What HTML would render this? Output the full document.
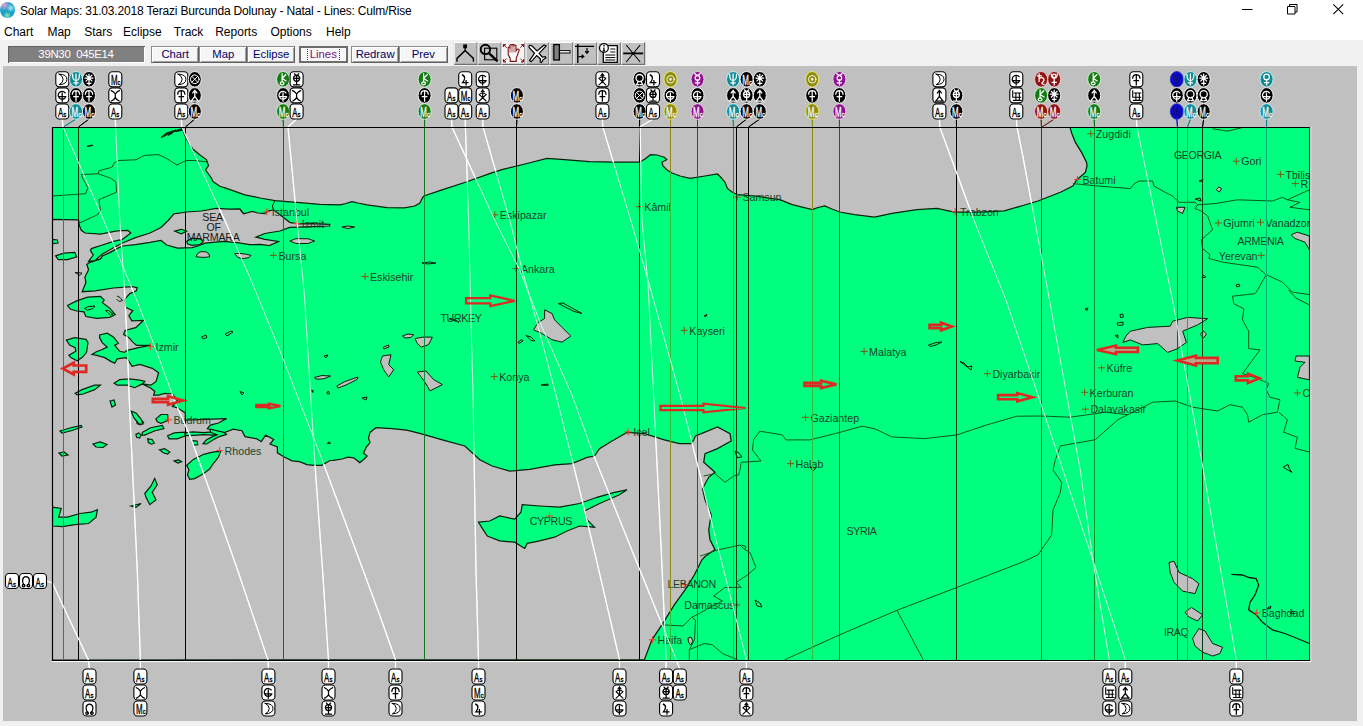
<!DOCTYPE html>
<html lang="en"><head><meta charset="utf-8"><title>Solar Maps</title>
<style>
html,body{margin:0;padding:0}
body{width:1363px;height:726px;overflow:hidden;background:#f0f0f0;font-family:"Liberation Sans",sans-serif;position:relative}
#title{position:absolute;left:0;top:0;width:1363px;height:22px;background:#fff}
#title .ico{position:absolute;left:0;top:2px;width:15px;height:16px;border-radius:50%;background:radial-gradient(circle at 28% 18%,#dca4dc 0,rgba(220,164,220,0) 38%),radial-gradient(circle at 72% 38%,#a8ecf4 0,rgba(168,236,244,0) 30%),radial-gradient(circle at 48% 84%,#98e4a8 0,rgba(152,228,168,0) 26%),#18a0c8}
#title .tt{position:absolute;left:20px;top:4px;font-size:12px;color:#000;white-space:nowrap;letter-spacing:-0.18px}
#title .wc{position:absolute;left:1223px;top:0}
#menu{position:absolute;left:0;top:22px;width:1363px;height:18px;background:#fff;font-size:12px}
#menu span{position:absolute;top:3px;color:#000}
#tb{position:absolute;left:0;top:40px;width:1363px;height:26px;background:#f0f0f0}
.coord{position:absolute;left:7.5px;top:6px;width:137px;height:17px;background:#808080;color:#fff;font-size:11.4px;letter-spacing:-0.3px;line-height:17px;text-align:center;box-shadow:inset 1px 1px 0 #606060, inset -1px -1px 0 #fff;white-space:pre}
.btn{position:absolute;top:6px;height:17px;line-height:15px;text-align:center;font-size:11.3px;color:#000068;background:#f6f6f6;border:1px solid #8c8c8c;border-right-color:#606060;border-bottom-color:#606060;box-shadow:inset 1px 1px 0 #fff,inset -1px -1px 0 #a0a0a0;box-sizing:border-box}
.btn.on{border:2px solid #6c6c6c;line-height:13px;color:#7a147a;background:#f8f8f8;box-shadow:none}
.btn.on i{position:absolute;left:6px;right:6px;top:1px;bottom:1px;border-left:1px dotted #404040;border-right:1px dotted #404040}
#client{position:absolute;left:3px;top:66px;width:1354px;height:655px;background:#c0c0c0}
svg#m{position:absolute;left:0;top:0}
svg text{font-family:"Liberation Sans",sans-serif}
</style></head><body>
<div id="title"><span class="ico"></span><span class="tt">Solar Maps: 31.03.2018 Terazi Burcunda Dolunay - Natal - Lines: Culm/Rise</span>
<svg class="wc" width="140" height="22" viewBox="0 0 140 22"><path d="M19 9.5H29.5M64.5 6.5H72V14H64.5ZM66.5 6.5V4.5H74V12H72" fill="none" stroke="#000" stroke-width="1"/><path d="M110.3 4.3L120.2 14.2M120.2 4.3L110.3 14.2" stroke="#000" stroke-width="1.05" fill="none"/></svg></div>
<div id="menu">
<span style="left:4px">Chart</span>
<span style="left:47.4px">Map</span>
<span style="left:84.2px">Stars</span>
<span style="left:123px">Eclipse</span>
<span style="left:173.8px">Track</span>
<span style="left:215.2px">Reports</span>
<span style="left:270.4px">Options</span>
<span style="left:326px">Help</span>
</div>
<div id="tb">
<div class="coord">39N30&nbsp; 045E14</div>
<div class="btn" style="left:151px;width:48.4px">Chart</div>
<div class="btn" style="left:199.2px;width:48.2px">Map</div>
<div class="btn" style="left:247.2px;width:48px">Eclipse</div>
<div class="btn on" style="left:299px;width:48.6px">Lines<i></i></div>
<div class="btn" style="left:351px;width:48.2px">Redraw</div>
<div class="btn" style="left:399px;width:48.6px">Prev</div>
</div>
<div id="client"></div>
<svg id="m" width="1363" height="726" viewBox="0 0 1363 726">
<defs><clipPath id="mc"><rect x="52.5" y="127.5" width="1257" height="533"/></clipPath>
<clipPath id="gc"><rect x="0" y="0" width="1363" height="127.5"/><rect x="0" y="660" width="1363" height="66"/><rect x="0" y="0" width="52.5" height="726"/><path d="M181.8 127L182.5 128.7L185.2 136.2L190 145L193.3 149.5L200 155L206.5 159.8L208.5 165.7L205.6 170L211 177.5L213 181.5L219.8 186.3L225 187.8L244.9 194.8L260 198L274.8 200.6L299.7 202.6L319.7 204.3L340 204.8L346 203.5L352 201.6L358 203L367 204.8L387 207.6L404.5 207.8L414.8 206L420 203L422.3 198L424 196L442 189.8L464.7 182.5L491.8 172.8L502 169.7L527 163.5L547 158.5L564.5 159.7L589.4 161.7L614.4 162.2L639.3 162.2L645 159L650.5 154.7L657 155L664.3 157.2L666.8 159.7L661.8 162.2L663 166L666.8 169.7L672 173L680 176L690 178.4L705 176L717.4 174L721 177.5L725 182.2L727.4 188.4L732 192L737.4 194.7L754.8 196L779.8 199.6L792.2 204.6L812.2 209.6L818 207.5L824.7 205.9L832 209L839.6 212L854.6 214.6L874.6 217L892 213.4L917 209.6L937 208.4L954.4 212L979.3 212L1004.3 210.9L1023 205.5L1038 201L1060.4 192.3L1072.9 186L1076.6 179.9L1085.4 172.4L1087 166L1086.6 162.4L1081.6 152.4L1075.4 142.4L1072 134L1070.4 128.7L1070 127Z"/><path d="M52 219.4L78.5 219.8L79.4 225.7L81.3 230.3L85 233L100.5 234L117 230.8L128 230.3L130.8 233L122.5 239.4L113.4 241.3L102.4 245L91.4 248.6L90.4 250.4L93.2 255L88.6 261.4L95 260.5L102.4 254L113.4 247.7L122.5 243L135.4 237.6L150 233L161 227.5L168.4 220.2L173.9 213.8L186.7 212L201.4 211L216 208.3L229 209.2L239.9 208.8L243.6 213.8L252.3 211.5L258 213L264.8 213.5L268 211L273.5 209.8L279 214L284.8 218.5L289.7 222.3L297.2 223.8L312 223.6L329.7 224.4L329.7 226L304.7 226.8L289.7 227.3L279.8 231L264.8 233.5L256 237.2L264.8 239.4L278.5 241.5L269.3 245.6L260 244.4L249.8 244.7L237.4 242.6L223.4 241.3L205 243.1L198 246L192.2 247.7L177.6 248L166.6 245L161 240.4L150 242.4L135.4 244.6L122.5 246L118.9 247.6L109.7 252.6L102.4 256L100.5 258.9L89.5 262.6L86.8 264.4L88.6 269.7L84.9 277L85.9 282.5L82.2 291.7L95 290.8L113.4 288L131.7 286.6L137.2 287.7L136.3 290.8L129.9 293.6L124.6 299.2L125.6 307.4L132.8 310.7L128.9 315.6L131.8 320.9L143.4 320.4L135.7 327.6L125.1 330.5L123.6 334.4L128.9 337.7L132.8 342.1L136.6 345.4L150.1 345.4L138.6 347.6L127 350.3L124.5 352.4L119.7 351.3L114.7 345.1L118.4 343.2L113.4 336.9L107.2 333.2L99.6 335L99.6 337.6L102.2 342.6L107.2 347L102.2 349.5L95.9 352L92.1 354.5L95.9 355.1L104.7 357.6L110.9 361.4L114.7 363.3L117.2 358.9L126 357.6L127.2 358.9L132.2 366.4L139.8 364.5L152.3 368.3L158.6 372.7L156.1 381.4L151 385.2L142.3 383.9L151 388.3L154.8 391.5L153.6 395.2L158.6 395.2L164.8 393.3L172.4 394L177.4 400.2L172.4 406.5L177.4 407.8L182.4 411L185.3 413L185.3 420.2L226.5 418.6L218.4 423L210.3 425.1L207.4 428.8L209.6 429.5L218.4 431.9L224.3 432.5L233.2 429.2L242 430.7L245 436.6L256.8 438.8L261.2 441.7L265.6 435.1L273.7 439.5L270 444L277.4 446.9L277.4 452.8L283.3 456.5L292.1 460.9L299.5 461.6L306.9 464.6L314.2 465.3L321.6 465.3L330 460.5L333.2 460.4L342 459L347.9 457.2L353.8 457.8L359.7 462.6L363.4 459.7L367.1 456L363.4 453.1L366.3 447.2L370 442.7L368.5 438.3L370 432.4L375.9 427.7L392.1 428.7L406.9 430.2L421.6 433.9L442.4 439.9L464.8 446L479.8 459.8L492.2 466L509.7 471L529.7 469.3L554.6 464.8L572 463.6L587 457.3L594.5 456L599.5 448.6L612 441L627 432.4L644.4 433.6L664.4 439.9L679.3 443.6L691.8 443.6L695.5 436L704.3 432.4L717.5 427L730 433.6L731.2 441L717.5 448.6L705 453.6L703.7 462.3L715 472.3L708.7 477.3L702.5 488.5L705 499.8L711.2 514.7L708.7 529.7L710 539.7L715 549.6L705 556.5L701.8 560L694.3 575L686.8 587.4L674.3 604.9L661.9 624.8L651.9 639.8L644.4 659.7L52 660Z"/></clipPath></defs>
<g id="tools">
<rect x="453.7" y="42" width="23.9" height="22.6" fill="#c0c0c0"/>
<path d="M454.2 64.6V42.5H477.1" stroke="#fff" stroke-width="1" fill="none"/>
<path d="M454.2 64.3H477.1V42.5" stroke="#707070" stroke-width="1.2" fill="none"/>
<rect x="477.6" y="42" width="23.9" height="22.6" fill="#c0c0c0"/>
<path d="M478.1 64.6V42.5H501.1" stroke="#fff" stroke-width="1" fill="none"/>
<path d="M478.1 64.3H501.1V42.5" stroke="#707070" stroke-width="1.2" fill="none"/>
<rect x="501.6" y="42" width="23.9" height="22.6" fill="#f4f4f4"/>
<path d="M502.1 64.6V42.5H525.0" stroke="#fff" stroke-width="1" fill="none"/>
<path d="M502.1 64.3H525.0V42.5" stroke="#707070" stroke-width="1.2" fill="none"/>
<rect x="525.5" y="42" width="23.9" height="22.6" fill="#c0c0c0"/>
<path d="M526.0 64.6V42.5H548.9" stroke="#fff" stroke-width="1" fill="none"/>
<path d="M526.0 64.3H548.9V42.5" stroke="#707070" stroke-width="1.2" fill="none"/>
<rect x="549.4" y="42" width="23.9" height="22.6" fill="#c0c0c0"/>
<path d="M549.9 64.6V42.5H572.8" stroke="#fff" stroke-width="1" fill="none"/>
<path d="M549.9 64.3H572.8V42.5" stroke="#707070" stroke-width="1.2" fill="none"/>
<rect x="573.4" y="42" width="23.9" height="22.6" fill="#c0c0c0"/>
<path d="M573.9 64.6V42.5H596.8" stroke="#fff" stroke-width="1" fill="none"/>
<path d="M573.9 64.3H596.8V42.5" stroke="#707070" stroke-width="1.2" fill="none"/>
<rect x="597.3" y="42" width="23.9" height="22.6" fill="#c0c0c0"/>
<path d="M597.8 64.6V42.5H620.7" stroke="#fff" stroke-width="1" fill="none"/>
<path d="M597.8 64.3H620.7V42.5" stroke="#707070" stroke-width="1.2" fill="none"/>
<rect x="621.2" y="42" width="23.9" height="22.6" fill="#c0c0c0"/>
<path d="M621.7 64.6V42.5H644.6" stroke="#fff" stroke-width="1" fill="none"/>
<path d="M621.7 64.3H644.6V42.5" stroke="#707070" stroke-width="1.2" fill="none"/>
<g transform="translate(453.7 42)" fill="none" stroke="#000" stroke-width="1.5"><path d="M11.4 6V8.6L3.3 16.4V19.8M11.4 8.6L19.7 16.4V19.8" stroke-width="1.4"/><rect x="9.5" y="2.4" width="3.8" height="3.8" fill="#000" stroke="none"/></g>
<g transform="translate(477.6 42)" fill="none" stroke="#000" stroke-width="1.5"><rect x="7" y="6.2" width="12.2" height="11.6" stroke-width="1.1"/><circle cx="7.8" cy="7.4" r="4.7" stroke-width="1.9"/><path d="M11.6 11.4L20 19.4" stroke-width="2.5"/></g>
<g transform="translate(501.6 42)" fill="none" stroke="#000" stroke-width="1.5"><path d="M8.6 19.4V16.4L6.6 12.6V5.6Q7.4 4.4 8.4 5.6V3.2Q9.4 2 10.4 3.2V2.8Q11.4 1.6 12.4 2.8V3.4Q13.4 2.4 14.4 3.6V9L15.6 7.2Q17 6.6 17.6 8L16 12.6L14.6 16.4V19.4Z" stroke="#7a0c0c" stroke-width="1.1" fill="#fff"/><path d="M8.4 5.6V10.6M10.4 3.4V10.6M12.4 3V10.6" stroke="#7a0c0c" stroke-width="0.7"/><path d="M1.8 2.6L5 5.8M22 2.6L18.8 5.8M1.8 19.8L5 16.6M22 19.8L18.8 16.6" stroke="#8a1010" stroke-width="1"/><path d="M1.8 2.6H4.2M1.8 2.6V5M22 2.6H19.6M22 2.6V5M1.8 19.8H4.4M1.8 19.8V17.2M22 19.8H19.4M22 19.8V17.2" stroke="#8a1010" stroke-width="1.2"/></g>
<g transform="translate(525.5 42)" fill="none" stroke="#000" stroke-width="1.5"><path transform="translate(23.6 0) scale(-1 1)" d="M3 4L5 3L12 9L17.6 3.6Q20.6 2.4 20 5.4L14.6 11.4L19.6 18.6L18 19.8L12.4 13.6L8.6 17L9 20L7.6 20.6L6 17.6L3.2 16L3.8 14.6L6.8 15L10 11.4Z" fill="#fff" stroke-width="1.2"/></g>
<g transform="translate(549.4 42)" fill="none" stroke="#000" stroke-width="1.5"><rect x="4.4" y="2.6" width="5.6" height="15.4" fill="#808080" stroke-width="1.3"/><rect x="10" y="8.6" width="10.6" height="2.4" fill="#fff" stroke-width="1"/><path d="M3.4 4V17" stroke="#606060" stroke-width="0.8" stroke-dasharray="1 1"/></g>
<g transform="translate(573.4 42)" fill="none" stroke="#000" stroke-width="1.5"><path d="M4.4 2V21M1.6 4.4H20.6" stroke-width="1.4"/><path d="M13.6 6V11M11.8 9.2L13.6 11.4L15.4 9.2M5 14.6H10M8.2 12.8L10.4 14.6L8.2 16.4" stroke-width="1.2"/></g>
<g transform="translate(597.3 42)" fill="none" stroke="#000" stroke-width="1.5"><path d="M6 7V20.4H20V3.6H10" fill="#fff" stroke-width="1.3"/><path d="M13 7H18M13 10H18M8 13H18M8 15.6H18M8 18H18" stroke-width="1"/><circle cx="6.6" cy="6" r="4.4" fill="#fff" stroke-width="1.3"/><path d="M6.6 5.6V8.6M5.4 8.8H7.8" stroke-width="1.3"/><rect x="5.9" y="3" width="1.5" height="1.4" fill="#000" stroke="none"/></g>
<g transform="translate(621.2 42)" fill="none" stroke="#000" stroke-width="1.5"><path d="M2 11.4H22" stroke-width="1.8"/><path d="M5 3L19 20M19 3L5 20" stroke-width="1.1"/></g>
</g>
<rect x="52.5" y="127.5" width="1257" height="533" fill="#00ff7e"/>
<g clip-path="url(#mc)">
<path d="M181.8 127L182.5 128.7L185.2 136.2L190 145L193.3 149.5L200 155L206.5 159.8L208.5 165.7L205.6 170L211 177.5L213 181.5L219.8 186.3L225 187.8L244.9 194.8L260 198L274.8 200.6L299.7 202.6L319.7 204.3L340 204.8L346 203.5L352 201.6L358 203L367 204.8L387 207.6L404.5 207.8L414.8 206L420 203L422.3 198L424 196L442 189.8L464.7 182.5L491.8 172.8L502 169.7L527 163.5L547 158.5L564.5 159.7L589.4 161.7L614.4 162.2L639.3 162.2L645 159L650.5 154.7L657 155L664.3 157.2L666.8 159.7L661.8 162.2L663 166L666.8 169.7L672 173L680 176L690 178.4L705 176L717.4 174L721 177.5L725 182.2L727.4 188.4L732 192L737.4 194.7L754.8 196L779.8 199.6L792.2 204.6L812.2 209.6L818 207.5L824.7 205.9L832 209L839.6 212L854.6 214.6L874.6 217L892 213.4L917 209.6L937 208.4L954.4 212L979.3 212L1004.3 210.9L1023 205.5L1038 201L1060.4 192.3L1072.9 186L1076.6 179.9L1085.4 172.4L1087 166L1086.6 162.4L1081.6 152.4L1075.4 142.4L1072 134L1070.4 128.7L1070 127Z" fill="#c0c0c0" stroke="#03220a" stroke-width="1.25"/>
<path d="M52 219.4L78.5 219.8L79.4 225.7L81.3 230.3L85 233L100.5 234L117 230.8L128 230.3L130.8 233L122.5 239.4L113.4 241.3L102.4 245L91.4 248.6L90.4 250.4L93.2 255L88.6 261.4L95 260.5L102.4 254L113.4 247.7L122.5 243L135.4 237.6L150 233L161 227.5L168.4 220.2L173.9 213.8L186.7 212L201.4 211L216 208.3L229 209.2L239.9 208.8L243.6 213.8L252.3 211.5L258 213L264.8 213.5L268 211L273.5 209.8L279 214L284.8 218.5L289.7 222.3L297.2 223.8L312 223.6L329.7 224.4L329.7 226L304.7 226.8L289.7 227.3L279.8 231L264.8 233.5L256 237.2L264.8 239.4L278.5 241.5L269.3 245.6L260 244.4L249.8 244.7L237.4 242.6L223.4 241.3L205 243.1L198 246L192.2 247.7L177.6 248L166.6 245L161 240.4L150 242.4L135.4 244.6L122.5 246L118.9 247.6L109.7 252.6L102.4 256L100.5 258.9L89.5 262.6L86.8 264.4L88.6 269.7L84.9 277L85.9 282.5L82.2 291.7L95 290.8L113.4 288L131.7 286.6L137.2 287.7L136.3 290.8L129.9 293.6L124.6 299.2L125.6 307.4L132.8 310.7L128.9 315.6L131.8 320.9L143.4 320.4L135.7 327.6L125.1 330.5L123.6 334.4L128.9 337.7L132.8 342.1L136.6 345.4L150.1 345.4L138.6 347.6L127 350.3L124.5 352.4L119.7 351.3L114.7 345.1L118.4 343.2L113.4 336.9L107.2 333.2L99.6 335L99.6 337.6L102.2 342.6L107.2 347L102.2 349.5L95.9 352L92.1 354.5L95.9 355.1L104.7 357.6L110.9 361.4L114.7 363.3L117.2 358.9L126 357.6L127.2 358.9L132.2 366.4L139.8 364.5L152.3 368.3L158.6 372.7L156.1 381.4L151 385.2L142.3 383.9L151 388.3L154.8 391.5L153.6 395.2L158.6 395.2L164.8 393.3L172.4 394L177.4 400.2L172.4 406.5L177.4 407.8L182.4 411L185.3 413L185.3 420.2L226.5 418.6L218.4 423L210.3 425.1L207.4 428.8L209.6 429.5L218.4 431.9L224.3 432.5L233.2 429.2L242 430.7L245 436.6L256.8 438.8L261.2 441.7L265.6 435.1L273.7 439.5L270 444L277.4 446.9L277.4 452.8L283.3 456.5L292.1 460.9L299.5 461.6L306.9 464.6L314.2 465.3L321.6 465.3L330 460.5L333.2 460.4L342 459L347.9 457.2L353.8 457.8L359.7 462.6L363.4 459.7L367.1 456L363.4 453.1L366.3 447.2L370 442.7L368.5 438.3L370 432.4L375.9 427.7L392.1 428.7L406.9 430.2L421.6 433.9L442.4 439.9L464.8 446L479.8 459.8L492.2 466L509.7 471L529.7 469.3L554.6 464.8L572 463.6L587 457.3L594.5 456L599.5 448.6L612 441L627 432.4L644.4 433.6L664.4 439.9L679.3 443.6L691.8 443.6L695.5 436L704.3 432.4L717.5 427L730 433.6L731.2 441L717.5 448.6L705 453.6L703.7 462.3L715 472.3L708.7 477.3L702.5 488.5L705 499.8L711.2 514.7L708.7 529.7L710 539.7L715 549.6L705 556.5L701.8 560L694.3 575L686.8 587.4L674.3 604.9L661.9 624.8L651.9 639.8L644.4 659.7L52 660Z" fill="#c0c0c0" stroke="#03220a" stroke-width="1.25"/>
<g fill="#00ff7e" stroke="#03220a" stroke-width="1.2">
<path d="M66.4 340.1L74.6 337.6L85.9 339.4L88 342.3L86.5 352.6L82.1 357.6L77.1 360.7L70.8 357.6L68.9 355.1L75.8 351.3L75.2 347.6L69.6 345.1Z"/>
<path d="M114.1 383.3L119.7 379.6L129.7 378.9L139.8 380.2L144.8 381.4L142.3 383.9L134.7 387.7L127.2 385.2L117.2 385.2Z"/>
<path d="M75.2 393.3L82.1 389.6L94.6 385.2L100.3 385.2L94.6 389.6L83.3 394L77.1 394.8Z"/>
<path d="M186.7 465.3L193.4 459.4L203.7 454.3L212.5 452.1L220.6 451.3L218.4 457.2L212.5 464.6L209.6 469L203.7 473.4L194.8 478.6L189.7 479.3L187.5 474.9L189 469.7Z"/>
<path d="M167.6 435.8L174.2 432.9L184.5 432.2L185.3 435.8L177.2 438.8L169.1 438.8Z"/>
<path d="M155.8 418.9L161 414.5L167.6 414.5L168.3 420.4L161 423.3L157.3 421.8Z"/>
<path d="M142.5 432.2L150.6 427.7L162.4 425.5L163.9 428.5L155.1 430.7L144.7 435.1L141.8 435.1Z"/>
<path d="M135.9 434.4L138.8 432.9L141.1 435.1L139.6 438.1L136.6 437.3Z"/>
<path d="M136.6 420.4L141.1 419.6L143.6 422.6L140.3 424.8L137.1 423.6Z"/>
<path d="M147.7 438.8L152.1 439.5L154.3 443.2L151.4 444.2L148.4 442.5Z"/>
<path d="M159.5 449.8L164.6 448.7L169.8 452.1L167.6 454L163.2 452.8Z"/>
<path d="M174.2 460.9L178.6 459.9L181.6 461.6L177.9 463.1Z"/>
<path d="M191.9 440.7L197.1 441L197.8 444.7L193.4 445.1Z"/>
<path d="M185.7 432.6L193.4 431.9L203.7 432.6L212.5 431.9L219.9 433.3L212.5 435.1L203.7 434.7L193.4 435.3L185.7 435.7Z"/>
<path d="M210.3 429.2L224.3 432.5L226.5 434.4L218.4 436.9L212.5 440.3L206.6 444L203 443.7L206.6 439.8L212.5 436.6L217 434.8L210.3 432.2Z"/>
<path d="M154.7 478.5L157.2 484.8L152.2 492.3L156 499.8L149.8 504.7L146 497.3L144.8 493.5L151 486Z"/>
<path d="M131 506L141 503.5L136 507.4Z"/>
<path d="M52.5 507.2L61.2 508.5L58.7 517.2L67.4 517.2L79.9 513.5L91.1 512.2L97.4 509.7L96.1 517.2L88.6 523.5L74.9 524.7L62.4 526.7L52.5 526Z"/>
<path d="M93 444L100 442L107 444.5L103 447.5L96 447Z"/>
<path d="M60 431L70 428L81 425.5L82 427L72 430.5L62 433Z"/>
<path d="M59 453L64 452L68 455L62 456Z"/>
<path d="M110 401L114 400L115.5 405L112 407Z"/>
<path d="M131 411L136 413L141 419L143 424L139 424L134 418Z"/>
<path d="M55.6 255.9L63.8 253.2L74.8 252.3L76.7 256.9L67.5 259.6L58.3 259.6Z"/>
<path d="M52.5 239.4L57.4 240L58 243L52.5 243.5Z"/>
<path d="M67.5 305.5L76.7 300.9L87.7 297.2L100.5 296.3L104.2 300L102.4 302.7L109.7 308.2L115.2 314.6L109.7 317.4L96.9 318.3L85.9 316.5L84 311.9L76.7 311L70.3 309.1Z"/>
<path d="M174.8 231.2L181.2 229.3L186.7 231.2L181.2 233.9Z"/>
<path d="M186.7 241.3L192.2 238.2L201.4 239.1L203.2 241.8L199.6 244.6L192.2 245.3L187.7 244Z"/>
<path d="M478.5 522.2L489.8 521L499.7 516L514.7 519.2L521 512.2L522.2 504.7L539.6 506L559.6 507.2L579.6 503.5L597 497.3L614.5 492.3L627 489.8L619.5 494.8L599.5 503.5L584.5 511L587 519.7L594.5 527.2L579.6 526L567 531L554.6 537.2L539.6 540.9L527.2 543.4L524.7 548.4L514.7 542.2L499.7 540.9L487.3 536L482.3 528.4Z"/>
</g>
<g fill="#c0c0c0" stroke="#03220a" stroke-width="1">
<path d="M196 256.8L197.5 253.5L201 251.6L206 251.8L209 254L209.6 257L203 257.4Z"/>
<path d="M544.6 309.8L552 313.5L554.6 319.8L562 327.3L570.8 336L562 342.2L552 339.7L542 333.5L533.4 329.8L538.4 322.3L544.6 318.5Z"/>
<path d="M402.5 336L408 334L413.7 334.7L411 337.5L405 338Z"/>
<path d="M415 338.5L424 337L432.4 337.2L428.6 344.7L421 347.2L417 343Z"/>
<path d="M417.4 372L426 371L433.6 379.6L442.4 384.6L430 390.9L424.9 382Z"/>
<path d="M382.5 356L391 354.7L388.7 364.7L393.7 369.7L388.7 377L383.7 369.7L380.5 362Z"/>
<path d="M383 347.5L388.5 345L389 347L384 349Z"/>
<path d="M314.4 377.5L322 375.5L330.6 376L324 378.8L316 379.2Z"/>
<path d="M336.8 385.9L345 381.5L358 377L357 379.5L346 385L338 388Z"/>
<path d="M289.8 241L296 238.6L308 238.8L314.7 241L308 243.5L296 243.5Z"/>
<path d="M342 227L348 226L354.6 227L348 228.6Z"/>
<path d="M234.6 253.6L240 253.4L246 254.2L251 255.4L249 257.6L243 258.6L238 257.6Z"/>
<path d="M1122.8 342.4L1126 336L1130.3 331.2L1147.7 327.4L1170.2 326.2L1172.7 321.2L1187.6 317.4L1207.6 318.7L1197.6 324.9L1182.7 331.2L1186.4 342.4L1177.7 348.6L1167.7 352.4L1157.7 343.6L1142.7 344.9L1130.3 339.9Z"/>
<path d="M1200.3 334.3L1203.3 331L1206.5 334L1203.5 338Z"/>
<path d="M1296 356L1309.4 356L1309.4 379.8L1297.4 377.3L1300 367.3L1305 362.3L1295 361Z"/>
<path d="M1291 234.7L1297.4 232.2L1309.4 236L1309.4 249.7L1305 242.2L1295 238.5Z"/>
<path d="M1176.4 207.3L1185 207.3L1182.6 213.5L1177.5 211Z"/>
<path d="M1216.3 189.8L1218.8 187L1221.5 188.6L1219.5 192Z"/>
<path d="M1169 562.5L1174 561.2L1179 572.4L1192.6 578.7L1198.9 583.7L1195 593.6L1182.7 591.2L1174 582.4L1170.2 572.4Z"/>
<path d="M1185 612.3L1191.4 607.4L1202.6 614.8L1197.6 621L1189 617Z"/>
<path d="M1192.6 638.5L1198.9 628.6L1205 631L1212.6 643.5L1222.6 647.3L1220 653.5L1212.6 656L1202.6 652.2L1195 646Z"/>
<path d="M688 638L691 637L693 641L690.5 645L688.5 642Z"/>
</g>
<g fill="#03220a" stroke="#03220a" stroke-width="0.8">
<path d="M161 137.5L166 133L171 131.5L176 130L172 133.5L168 135.5L170 133L164 136.5Z"/>
<path d="M182 128.5L176 130.5L171 131.5L177 131.5L183 130Z"/>
</g>
<g fill="none" stroke="#03220a" stroke-width="1">
<path d="M558.4 303.6L563 303L582 313.5L574 311.5Z"/>
<path d="M449 318.6L453 319L456 320.4L459 322.4L456.5 321.2L452 320Z"/>
<path d="M422 263L430 262L436 263L428 264Z"/>
<path d="M541 385L548 384L548 385.5Z"/>
<path d="M518 342L522 339.5L523 341L519 343.5Z"/>
<path d="M526 335.5L531 337L535 341L531 340.5Z"/>
<path d="M704 316L707 314.5L706 316.5Z"/>
<path d="M928.5 345L936 342.5L942 342L936 345L930 346.5Z"/>
<path d="M960 361.5L964 363L968 367L972 366L971 370Z"/>
<path d="M1085 309L1088 308L1087 310.5Z"/>
<path d="M1120 314.5L1122.8 314L1123.5 317L1120.5 317.5Z"/>
<path d="M1117 323L1123 322L1123 325L1118 325.5Z"/>
<path d="M1115 335.5L1118 335L1118 338Z"/>
<path d="M1283 467L1288 464.5L1289.5 469L1292 472.5L1288 470Z"/>
<path d="M755 600L760 603L762 607L757 606Z"/>
<path d="M735 451L739 453L742 457L737 457.5Z"/>
<path d="M810 467L816 468L813 471Z"/>
<path d="M87 146.5L92 145L93 145.5Z"/>
<path d="M1199 181L1203 179.5L1202 181.5Z"/>
<path d="M1195 199L1200 198L1201 201Z"/>
<path d="M1203 275L1206 277L1202 278Z"/>
<path d="M1236 285L1239 284L1240 286L1237 287Z"/>
<path d="M327 392L329 391.5L329.5 394L327.5 394Z"/>
<path d="M311.5 390.5L313 390.5L313 392.5Z"/>
<path d="M362 398L367 397L366 400Z"/>
<path d="M327.5 443.4L329 441.8L330.6 443.4Z"/>
<path d="M240 391.5L244 393L242 395Z"/>
<path d="M201.5 337L206 335L207 337.5L203 339Z"/>
<path d="M225 334L231 331L233 332L227 336Z"/>
<path d="M324 356L328 355L326 358Z"/>
<path d="M75 272.5L82 273L80 275.5Z"/>
<path d="M1267 608.5L1271 606L1270 609Z"/>
<path d="M1290 613L1293 611L1294 614Z"/>
</g>
<g fill="none" stroke="#03220a" stroke-width="1">
<path d="M273.5 209.8L272.4 206L274.8 200.6"/>
<path d="M240 208.8L242 212.6L246 213.8"/>
<path d="M117 296L120 297.5L122.5 300.5L119 301.5L116.5 299"/>
<path d="M84.5 308.5L88 306.6L95 306L93 308.5L87 310.2L84.5 308.5"/>
<path d="M105.5 310.5L108.5 310.5L113 314L110.5 315L105.5 310.5"/>
</g>
<g fill="none" stroke="#0a5a18" stroke-width="1">
<path d="M208 162L194.8 160.5L186 160.5L177 165L165.3 157.6L158 154.6L144.6 155.4L135.8 159.8L118 160.5L113.7 163.5L112.2 167.2L99 170.8L98.2 173.8"/>
<path d="M98.2 173.8L81.3 174.5L82.7 178.2L87.9 187.8L85.7 193.7L52.5 196"/>
<path d="M98.2 173.8L110.7 178.2L115.9 181.9L116.6 192.2L99 199.6L100.4 210L98.2 214.3L85.7 220.2L79 223.2"/>
<path d="M703.7 476L715 473.6L725 482.3L733.7 476L738.7 474.8L740 469.8L741.2 462.3L761 461L752.4 449.9L753.6 439.9L759.9 431.2L782.3 434.9L786 439.9L809.8 439.9L839.7 432.4L862.1 426.2L874.6 428.7L892 436.9L924.5 438.6L957 434.9L986.8 424.9L1016.8 416.2L1041.7 416L1070.4 417.2L1105.3 412.2L1127.8 414.7L1152.7 402.2L1175.2 401L1192.6 407.2L1217.6 411L1230 404.7L1242.5 407.2L1247.5 414.7L1248.7 422.2L1262.5 414.7L1277.4 412.2L1280 399.7L1270 397.3L1266.2 389.8L1268.7 383.5L1257.5 378.5L1242.5 373.6L1260 349.9L1248.7 348.6L1248.7 331.2L1242.5 319.9L1243.8 308.7L1233.8 303.7L1232.5 296.2L1255 293.7L1257.5 290L1266.2 274.7L1257.5 267.2L1222.6 262.2L1208.8 258.4L1210 254.7L1202.6 248.5L1201.3 239.7L1212.6 229.8L1207.6 216L1201.3 211L1195 208.6L1197.6 204.8L1215 203.6L1237.5 199.8L1272.4 201L1282.4 197.3L1287.4 199.8L1309.4 189.8"/>
<path d="M1287.4 199.8L1299.9 202.3L1290 207.3L1309.4 209.8"/>
<path d="M1266.2 274.7L1282.4 282.1L1292.4 292.1L1309.4 294.6"/>
<path d="M1288.6 290L1296 298L1309.4 305"/>
<path d="M1278.7 412.2L1287.4 419.7L1283.7 432.2L1297.4 437.2L1295 448.4L1309.4 452"/>
<path d="M1072.9 183.6L1097.8 186L1130.3 188.6L1134 184L1139 181L1152.7 181L1154 186L1165.2 192.3L1172.7 196L1178.9 202.3L1195 202.3L1197.6 204.8"/>
<path d="M1212.6 128.7L1227.5 131.2L1242.5 127.5"/>
<path d="M1127.8 414.7L1117.8 419.7L1095.3 439.7L1060.4 445.9L1055.4 459.6L1053 470L1061.7 482.4L1060.4 492.4L1053 509.9L1051.7 534.8L1038 554.8L1023 561.8L957 587.4L897 610.3L839.7 634.8L784.8 659.7"/>
<path d="M897 610.3L923.2 659.7"/>
<path d="M700 556.2L717.5 550L740 545L744 549L750 552.5L756 567.4L747.4 575L736.2 582.4L741.2 587.4L725 587.4L713.7 596L722.4 601L710 607.3L699.3 613.5L691.8 617.3L683 626L661.9 624.8"/>
<path d="M691.8 617.3L695.5 620L694.5 639.8L689.3 649.7L689.3 659.7"/>
<path d="M689.3 649.7L704.3 643.5L712.5 644.8L722.4 653.5L737.4 659.7"/>
<path d="M741.2 545L746 546.5L745 549"/>
</g>
<g fill="none" stroke="#04200a" stroke-width="1.3">
<path d="M1231.3 574.4L1242.5 575L1249 577.5L1256.2 578.7L1258.7 584.9L1255 594.9L1250 602.4L1248.7 609.9L1256.2 614.8L1262.5 622.3L1272.4 629.8L1285 633.5L1297.4 638.5L1309.4 643.5"/>
</g>
</g>
<g clip-path="url(#mc)"><g font-size="10.67" fill="#18452a">
<path d="M263.3 211.8H270.3M266.8 208.3V215.3" stroke="#e8402a" stroke-width="1" fill="none"/>
<text x="271.8" y="216">Istanbul</text>
<path d="M293.2 223.5H300.2M296.7 220V227" stroke="#e8402a" stroke-width="1" fill="none"/>
<text x="301.7" y="227.7">Izmit</text>
<path d="M270 255.4H277M273.5 251.9V258.9" stroke="#7a5a12" stroke-width="1" fill="none"/>
<text x="278.5" y="259.6">Bursa</text>
<path d="M361.5 276.6H368.5M365 273.1V280.1" stroke="#7a5a12" stroke-width="1" fill="none"/>
<text x="370" y="280.8">Eskisehir</text>
<path d="M491.3 214.8H498.3M494.8 211.3V218.3" stroke="#7a5a12" stroke-width="1" fill="none"/>
<text x="499.8" y="219">Eskipazar</text>
<path d="M512.5 268.6H519.5M516 265.1V272.1" stroke="#7a5a12" stroke-width="1" fill="none"/>
<text x="521" y="272.8">Ankara</text>
<path d="M490.7 376.6H497.7M494.2 373.1V380.1" stroke="#7a5a12" stroke-width="1" fill="none"/>
<text x="499.2" y="380.8">Konya</text>
<path d="M680.8 330.3H687.8M684.3 326.8V333.8" stroke="#7a5a12" stroke-width="1" fill="none"/>
<text x="689.3" y="334.5">Kayseri</text>
<path d="M635.8 206.6H642.8M639.3 203.1V210.1" stroke="#7a5a12" stroke-width="1" fill="none"/>
<text x="644.3" y="210.8">Kâmil</text>
<path d="M733.9 197.1H740.9M737.4 193.6V200.6" stroke="#e8402a" stroke-width="1" fill="none"/>
<text x="742.4" y="201.3">Samsun</text>
<path d="M951.6 211.6H958.6M955.1 208.1V215.1" stroke="#e8402a" stroke-width="1" fill="none"/>
<text x="960.1" y="215.8">Trabzon</text>
<path d="M1087.3 133.7H1094.3M1090.8 130.2V137.2" stroke="#7a5a12" stroke-width="1" fill="none"/>
<text x="1095.8" y="137.9">Zugdidi</text>
<path d="M1073.9 179.4H1080.9M1077.4 175.9V182.9" stroke="#e8402a" stroke-width="1" fill="none"/>
<text x="1082.4" y="183.6">Batumi</text>
<path d="M1232.8 161.2H1239.8M1236.3 157.7V164.7" stroke="#7a5a12" stroke-width="1" fill="none"/>
<text x="1241.3" y="165.4">Gori</text>
<path d="M1276.9 174.4H1283.9M1280.4 170.9V177.9" stroke="#7a5a12" stroke-width="1" fill="none"/>
<text x="1285.4" y="178.6">Tbilisi</text>
<path d="M1291.9 183.6H1298.9M1295.4 180.1V187.1" stroke="#7a5a12" stroke-width="1" fill="none"/>
<text x="1300.4" y="187.8">R</text>
<path d="M1214.8 223H1221.8M1218.3 219.5V226.5" stroke="#7a5a12" stroke-width="1" fill="none"/>
<text x="1223.3" y="227.2">Gjumri</text>
<path d="M1257 222.3H1264M1260.5 218.8V225.8" stroke="#7a5a12" stroke-width="1" fill="none"/>
<text x="1265.5" y="226.5">Vanadzor</text>
<path d="M860.6 351.5H867.6M864.1 348V355" stroke="#7a5a12" stroke-width="1" fill="none"/>
<text x="869.1" y="355.7">Malatya</text>
<path d="M983.9 373.7H990.9M987.4 370.2V377.2" stroke="#7a5a12" stroke-width="1" fill="none"/>
<text x="992.4" y="377.9">Diyarbakir</text>
<path d="M1098.1 367.8H1105.1M1101.6 364.3V371.3" stroke="#7a5a12" stroke-width="1" fill="none"/>
<text x="1106.6" y="372">Küfre</text>
<path d="M1081.1 392.3H1088.1M1084.6 388.8V395.8" stroke="#7a5a12" stroke-width="1" fill="none"/>
<text x="1089.6" y="396.5">Kerburan</text>
<path d="M1081.9 409.2H1088.9M1085.4 405.7V412.7" stroke="#7a5a12" stroke-width="1" fill="none"/>
<text x="1090.4" y="413.4">Dalavakasir</text>
<path d="M1293.9 393H1300.9M1297.4 389.5V396.5" stroke="#7a5a12" stroke-width="1" fill="none"/>
<text x="1302.4" y="397.2">O</text>
<path d="M802 417.4H809M805.5 413.9V420.9" stroke="#7a5a12" stroke-width="1" fill="none"/>
<text x="810.5" y="421.6">Gaziantep</text>
<path d="M787 463.6H794M790.5 460.1V467.1" stroke="#7a5a12" stroke-width="1" fill="none"/>
<text x="795.5" y="467.8">Halab</text>
<path d="M624.7 431.9H631.7M628.2 428.4V435.4" stroke="#e8402a" stroke-width="1" fill="none"/>
<text x="633.2" y="436.1">Icel</text>
<path d="M147 346.7H154M150.5 343.2V350.2" stroke="#e8402a" stroke-width="1" fill="none"/>
<text x="155.5" y="350.9">Izmir</text>
<path d="M165 419.9H172M168.5 416.4V423.4" stroke="#e8402a" stroke-width="1" fill="none"/>
<text x="173.5" y="424.1">Budrum</text>
<path d="M216.1 450.6H223.1M219.6 447.1V454.1" stroke="#e8402a" stroke-width="1" fill="none"/>
<text x="224.6" y="454.8">Rhodes</text>
<path d="M648.9 639.8H655.9M652.4 636.3V643.3" stroke="#e8402a" stroke-width="1" fill="none"/>
<text x="657.4" y="644">Haifa</text>
<path d="M1253.2 612.8H1260.2M1256.7 609.3V616.3" stroke="#e8402a" stroke-width="1" fill="none"/>
<text x="1261.7" y="617">Baghdad</text>
<path d="M1257.7 255.4H1264.7M1261.2 251.9V258.9" stroke="#7a5a12" stroke-width="1" fill="none"/>
<text x="1218.8" y="259.6">Yerevan</text>
<path d="M733.4 604.9H740.4M736.9 601.4V608.4" stroke="#7a5a12" stroke-width="1" fill="none"/>
<text x="684.3" y="609.1">Damascus</text>
<path d="M546.1 516H553.1M549.6 512.5V519.5" stroke="#e8402a" stroke-width="1" fill="none"/>
<path d="M681.3 584.4H688.3M684.8 580.9V587.9" stroke="#e8402a" stroke-width="1" fill="none"/>
<text x="440.4" y="321.8" letter-spacing="-0.35">TURKEY</text>
<text x="1173.9" y="158.7" letter-spacing="-0.35">GEORGIA</text>
<text x="1237.5" y="244.7" letter-spacing="-0.35">ARMENIA</text>
<text x="846.4" y="534.7" letter-spacing="-0.35">SYRIA</text>
<text x="529.7" y="525" letter-spacing="-0.35">CYPRUS</text>
<text x="667.4" y="587.9" letter-spacing="-0.35">LEBANON</text>
<text x="1163.9" y="636" letter-spacing="-0.35">IRAQ</text>
</g><g font-size="10.67" fill="#181818">
<text x="202.3" y="221.1" letter-spacing="-0.2">SEA</text>
<text x="206.5" y="231.2" letter-spacing="-0.2">OF</text>
<text x="186.7" y="241.3" letter-spacing="-0.2">MARMARA</text>
</g></g>
<path d="M76 119L63.5 127V660" stroke="#00b074" stroke-width="1" fill="none"/>
<path d="M89 119L78.5 127V660" stroke="#003c12" stroke-width="1" fill="none"/>
<path d="M194.8 119L185.5 127V660" stroke="#003c12" stroke-width="1" fill="none"/>
<path d="M283.1 119L283.5 127V660" stroke="#00902e" stroke-width="1" fill="none"/>
<path d="M424.6 119L424.5 127V660" stroke="#00902e" stroke-width="1" fill="none"/>
<path d="M516.9 119L516.5 127V660" stroke="#003c12" stroke-width="1" fill="none"/>
<path d="M639.6 119L639.5 127V660" stroke="#003c12" stroke-width="1" fill="none"/>
<path d="M670.5 119L670.5 127V660" stroke="#30be3c" stroke-width="1" fill="none"/>
<path d="M697.5 119L697.5 127V660" stroke="#00704e" stroke-width="1" fill="none"/>
<path d="M733.1 119L733.5 127V660" stroke="#00b074" stroke-width="1" fill="none"/>
<path d="M746.6 119L736.5 127V660" stroke="#003c12" stroke-width="1" fill="none"/>
<path d="M759.8 119L748.5 127V660" stroke="#003c12" stroke-width="1" fill="none"/>
<path d="M812.2 119L812.5 127V660" stroke="#30be3c" stroke-width="1" fill="none"/>
<path d="M839.4 119L839.5 127V660" stroke="#00704e" stroke-width="1" fill="none"/>
<path d="M956.4 119L956.5 127V660" stroke="#003c12" stroke-width="1" fill="none"/>
<path d="M1041.1 119L1041.5 127V660" stroke="#2c641c" stroke-width="1" fill="none"/>
<path d="M1054.2 119L1042.2 127" stroke="#2c641c" stroke-width="1" fill="none"/>
<path d="M1094.2 119L1094.5 127V660" stroke="#00902e" stroke-width="1" fill="none"/>
<path d="M1176.8 119L1177.5 127V660" stroke="#0a4cb0" stroke-width="1" fill="none"/>
<path d="M1190.4 119L1187.5 127V660" stroke="#00b074" stroke-width="1" fill="none"/>
<path d="M1203.7 119L1202.5 127V660" stroke="#003c12" stroke-width="1" fill="none"/>
<path d="M1266.6 119L1266.5 127V660" stroke="#00b074" stroke-width="1" fill="none"/>
<path d="M62.3 119L63 127L103.6 220L122.3 265L137.6 302.3L155.9 349.7L174.7 401L189.7 435L213 499.8L237.9 571L268.1 660.3L268.4 669" stroke="#d4ffe8" stroke-width="1" fill="none" stroke-opacity="0.95"/>
<path d="M115.3 119L115.6 127L119.8 220L124.8 294.8L127.3 344.7L129.3 401L133.5 489.8L137.3 571L140.4 660L140.4 669" stroke="#d4ffe8" stroke-width="1" fill="none" stroke-opacity="0.95"/>
<path d="M181.3 119L181.8 127L224.6 220L252 282.4L279.5 349.7L299.4 401L320.3 454.9L363.4 571L380 616L395.5 659.7L395.5 669" stroke="#d4ffe8" stroke-width="1" fill="none" stroke-opacity="0.95"/>
<path d="M296.6 119L288 127L296.9 220L304.4 294.8L310.6 395L315 464.8L322.6 571L328.5 660L328.5 669" stroke="#d4ffe8" stroke-width="1" fill="none" stroke-opacity="0.95"/>
<path d="M451.5 119L452 127L494.7 220L519.7 269.9L542.1 327.3L572 395L593.6 454.9L631.8 550L650 594.9L676.4 660L679.8 669" stroke="#d4ffe8" stroke-width="1" fill="none" stroke-opacity="0.95"/>
<path d="M465.2 119L465.4 127L468.6 220L471 319.8L473 395L476 571L478.5 659.7L478.5 669" stroke="#d4ffe8" stroke-width="1" fill="none" stroke-opacity="0.95"/>
<path d="M482.7 119L483 127L509.7 220L522.2 269.9L539.6 332.2L556 395L579.6 489.8L596 558L619.5 659.7L619.5 669" stroke="#d4ffe8" stroke-width="1" fill="none" stroke-opacity="0.95"/>
<path d="M602.4 119L602.8 127L630.7 220L649.4 284.9L680 395L699.4 472.3L715.6 538L746.4 659.7L746.4 669" stroke="#d4ffe8" stroke-width="1" fill="none" stroke-opacity="0.95"/>
<path d="M653 119L640 127L641.9 220L648.1 284.9L653.6 395L661.6 558L666.1 659.7L666.1 669" stroke="#d4ffe8" stroke-width="1" fill="none" stroke-opacity="0.95"/>
<path d="M939.4 119L939.8 127L974.3 221L1006 300L1040 401L1092.8 559.8L1125.3 659.7L1125.3 669" stroke="#d4ffe8" stroke-width="1" fill="none" stroke-opacity="0.95"/>
<path d="M1016.3 119L1017 127L1023 157L1049.5 300L1080.4 471L1092.8 559.8L1109.3 659.7L1109.3 669" stroke="#d4ffe8" stroke-width="1" fill="none" stroke-opacity="0.95"/>
<path d="M1136.3 119L1137 127L1172.7 301L1202.6 466L1216.3 545L1236.3 659.7L1236.3 669" stroke="#d4ffe8" stroke-width="1" fill="none" stroke-opacity="0.95"/>
<path d="M47 581L52.4 583L88.5 660.3L89.5 669" stroke="#d4ffe8" stroke-width="1" fill="none" stroke-opacity="0.95"/>
<g clip-path="url(#gc)"><path d="M76 119L63.5 127V660" stroke="#14828c" stroke-width="1" fill="none"/>
<path d="M89 119L78.5 127V660" stroke="#000" stroke-width="1" fill="none"/>
<path d="M194.8 119L185.5 127V660" stroke="#000" stroke-width="1" fill="none"/>
<path d="M283.1 119L283.5 127V660" stroke="#14701a" stroke-width="1" fill="none"/>
<path d="M424.6 119L424.5 127V660" stroke="#14701a" stroke-width="1" fill="none"/>
<path d="M516.9 119L516.5 127V660" stroke="#000" stroke-width="1" fill="none"/>
<path d="M639.6 119L639.5 127V660" stroke="#000" stroke-width="1" fill="none"/>
<path d="M670.5 119L670.5 127V660" stroke="#8c8c14" stroke-width="1" fill="none"/>
<path d="M697.5 119L697.5 127V660" stroke="#8c148c" stroke-width="1" fill="none"/>
<path d="M733.1 119L733.5 127V660" stroke="#14828c" stroke-width="1" fill="none"/>
<path d="M746.6 119L736.5 127V660" stroke="#000" stroke-width="1" fill="none"/>
<path d="M759.8 119L748.5 127V660" stroke="#000" stroke-width="1" fill="none"/>
<path d="M812.2 119L812.5 127V660" stroke="#8c8c14" stroke-width="1" fill="none"/>
<path d="M839.4 119L839.5 127V660" stroke="#8c148c" stroke-width="1" fill="none"/>
<path d="M956.4 119L956.5 127V660" stroke="#000" stroke-width="1" fill="none"/>
<path d="M1041.1 119L1041.5 127V660" stroke="#8c1414" stroke-width="1" fill="none"/>
<path d="M1054.2 119L1042.2 127" stroke="#8c1414" stroke-width="1" fill="none"/>
<path d="M1094.2 119L1094.5 127V660" stroke="#14701a" stroke-width="1" fill="none"/>
<path d="M1176.8 119L1177.5 127V660" stroke="#1010d0" stroke-width="1" fill="none"/>
<path d="M1190.4 119L1187.5 127V660" stroke="#14828c" stroke-width="1" fill="none"/>
<path d="M1203.7 119L1202.5 127V660" stroke="#000" stroke-width="1" fill="none"/>
<path d="M1266.6 119L1266.5 127V660" stroke="#14828c" stroke-width="1" fill="none"/>
<path d="M62.3 119L63 127L103.6 220L122.3 265L137.6 302.3L155.9 349.7L174.7 401L189.7 435L213 499.8L237.9 571L268.1 660.3L268.4 669" stroke="#fff" stroke-width="1.3" fill="none"/>
<path d="M115.3 119L115.6 127L119.8 220L124.8 294.8L127.3 344.7L129.3 401L133.5 489.8L137.3 571L140.4 660L140.4 669" stroke="#fff" stroke-width="1.3" fill="none"/>
<path d="M181.3 119L181.8 127L224.6 220L252 282.4L279.5 349.7L299.4 401L320.3 454.9L363.4 571L380 616L395.5 659.7L395.5 669" stroke="#fff" stroke-width="1.3" fill="none"/>
<path d="M296.6 119L288 127L296.9 220L304.4 294.8L310.6 395L315 464.8L322.6 571L328.5 660L328.5 669" stroke="#fff" stroke-width="1.3" fill="none"/>
<path d="M451.5 119L452 127L494.7 220L519.7 269.9L542.1 327.3L572 395L593.6 454.9L631.8 550L650 594.9L676.4 660L679.8 669" stroke="#fff" stroke-width="1.3" fill="none"/>
<path d="M465.2 119L465.4 127L468.6 220L471 319.8L473 395L476 571L478.5 659.7L478.5 669" stroke="#fff" stroke-width="1.3" fill="none"/>
<path d="M482.7 119L483 127L509.7 220L522.2 269.9L539.6 332.2L556 395L579.6 489.8L596 558L619.5 659.7L619.5 669" stroke="#fff" stroke-width="1.3" fill="none"/>
<path d="M602.4 119L602.8 127L630.7 220L649.4 284.9L680 395L699.4 472.3L715.6 538L746.4 659.7L746.4 669" stroke="#fff" stroke-width="1.3" fill="none"/>
<path d="M653 119L640 127L641.9 220L648.1 284.9L653.6 395L661.6 558L666.1 659.7L666.1 669" stroke="#fff" stroke-width="1.3" fill="none"/>
<path d="M939.4 119L939.8 127L974.3 221L1006 300L1040 401L1092.8 559.8L1125.3 659.7L1125.3 669" stroke="#fff" stroke-width="1.3" fill="none"/>
<path d="M1016.3 119L1017 127L1023 157L1049.5 300L1080.4 471L1092.8 559.8L1109.3 659.7L1109.3 669" stroke="#fff" stroke-width="1.3" fill="none"/>
<path d="M1136.3 119L1137 127L1172.7 301L1202.6 466L1216.3 545L1236.3 659.7L1236.3 669" stroke="#fff" stroke-width="1.3" fill="none"/>
<path d="M47 581L52.4 583L88.5 660.3L89.5 669" stroke="#fff" stroke-width="1.3" fill="none"/></g>
<g clip-path="url(#mc)"><path d="M86.2 365.5H73.7V362.8L62.8 368.6L73.7 374.4V371.8H86.2Z" fill="none" stroke="#dc2a22" stroke-width="2.7" stroke-linejoin="miter"/>
<path d="M152.8 398.9H168.1V396.3L183.1 400.5L168.1 404.7V402.1H152.8Z" fill="none" stroke="#dc2a22" stroke-width="2.7" stroke-linejoin="miter"/>
<path d="M256.4 405.1H269.0V403.8L280.4 406L269.0 408.2V406.9H256.4Z" fill="none" stroke="#dc2a22" stroke-width="2.6" stroke-linejoin="miter"/>
<path d="M466.1 298.2H490.3V295.5L514.6 300.8L490.3 306.1V303.4H466.1Z" fill="none" stroke="#dc2a22" stroke-width="2.3" stroke-linejoin="miter"/>
<path d="M660.5 405.8H703.4V403.6L745.6 408L703.4 412.4V410.2H660.5Z" fill="none" stroke="#dc2a22" stroke-width="2.2" stroke-linejoin="miter"/>
<path d="M804.5 382.9H821.1V380.7L836.4 384.4L821.1 388.1V385.8H804.5Z" fill="none" stroke="#dc2a22" stroke-width="2.7" stroke-linejoin="miter"/>
<path d="M929.6 324.9H941.2V322.7L951.8 326.5L941.2 330.3V328.1H929.6Z" fill="none" stroke="#dc2a22" stroke-width="2.7" stroke-linejoin="miter"/>
<path d="M998.1 395.1H1017.3V393.1L1032.7 397.2L1017.3 401.3V399.3H998.1Z" fill="none" stroke="#dc2a22" stroke-width="2.6" stroke-linejoin="miter"/>
<path d="M1137.9 347.8H1116.0V345.6L1096.9 349.9L1116.0 354.2V352.0H1137.9Z" fill="#b8a888" stroke="#dc2a22" stroke-width="2.6" stroke-linejoin="miter"/>
<path d="M1217.7 357.9H1195.9V355.7L1177.3 360.6L1195.9 365.5V363.3H1217.7Z" fill="#b8a888" stroke="#dc2a22" stroke-width="2.6" stroke-linejoin="miter"/>
<path d="M1235.8 376.2H1248.0V373.6L1259.5 378.3L1248.0 383.0V380.4H1235.8Z" fill="none" stroke="#dc2a22" stroke-width="2.6" stroke-linejoin="miter"/></g>
<path d="M52.5 661V127.5H1309.5" fill="none" stroke="#000" stroke-width="1.2"/><path d="M52 660.5H1310" stroke="#000" stroke-width="1.2"/><path d="M1309.8 127V661" stroke="#000" stroke-width="1"/><path d="M52 661.6H1311" stroke="#fff" stroke-width="1"/><path d="M1310.8 127V662" stroke="#e8e8e8" stroke-width="1"/>
<g transform="translate(55.3 71.3)"><rect x="0.5" y="0.5" width="13" height="15" rx="3.6" ry="3.6" fill="#fff" stroke="#000" stroke-width="1.1"/><g fill="none" stroke="#000" stroke-width="1.25" stroke-linecap="square" style="color:#000"><path d="M3.8 2.8Q11.8 3 11.6 8Q11.6 13 3.8 13.4Q7.8 11.6 7.8 8Q7.8 4.4 3.8 2.8Z" stroke-width="1"/></g></g>
<g transform="translate(55.3 87.4)"><rect x="0.5" y="0.5" width="13" height="15" rx="3.6" ry="3.6" fill="#fff" stroke="#000" stroke-width="1.1"/><g fill="none" stroke="#000" stroke-width="1.25" stroke-linecap="square" style="color:#000"><path d="M9.8 5.4A3.9 3.9 0 1 0 9.8 10.4M6.9 5.6V13.6M3.8 9.3H10.4"/></g></g>
<g transform="translate(55.3 103.5)"><rect x="0.5" y="0.5" width="13" height="15" rx="3.6" ry="3.6" fill="#fff" stroke="#000" stroke-width="1.1"/><g stroke="#000" stroke-width="0.35" fill="#000"><text x="2.6" y="13.5" font-size="13.4" textLength="5.2" lengthAdjust="spacingAndGlyphs">A</text><text x="8" y="13.5" font-size="8" textLength="3" lengthAdjust="spacingAndGlyphs">s</text></g></g>
<g transform="translate(69.0 71.3)"><ellipse cx="7" cy="8" rx="6.5" ry="7.8" fill="#148a94" stroke="#c8f4f8" stroke-width="0.9"/><g fill="none" stroke="#fff" stroke-width="1.25" stroke-linecap="square" style="color:#fff"><path d="M7 2.8V13.6M3.6 3.2Q3.4 9.2 7 9.2Q10.6 9.2 10.4 3.2M5 11.6H9"/></g></g>
<g transform="translate(69.0 87.4)"><ellipse cx="7" cy="8" rx="6.5" ry="7.8" fill="#000" stroke="#fff" stroke-width="0.9"/><g fill="none" stroke="#fff" stroke-width="1.25" stroke-linecap="square" style="color:#fff"><path d="M3.4 6.8Q3.6 3.2 7 3.2Q10.4 3.2 10.6 6.8M7 3.2V13.6M4.8 9.2H9.2"/></g></g>
<g transform="translate(69.0 103.5)"><ellipse cx="7" cy="8" rx="6.5" ry="7.8" fill="#148a94" stroke="#c8f4f8" stroke-width="0.9"/><g stroke="#fff" stroke-width="0.3" fill="#fff"><text x="2.6" y="13.5" font-size="14" textLength="6.6" lengthAdjust="spacingAndGlyphs">M</text><text x="9.3" y="13.5" font-size="8" textLength="2.9" lengthAdjust="spacingAndGlyphs">c</text></g></g>
<g transform="translate(82.0 71.3)"><ellipse cx="7" cy="8" rx="6.5" ry="7.8" fill="#000" stroke="#fff" stroke-width="0.9"/><g fill="none" stroke="#fff" stroke-width="1.25" stroke-linecap="square" style="color:#fff"><path d="M7 3V13.6M3.2 6.8H10.8M4.2 4L9.8 9.6M9.8 4L4.2 9.6M5.2 12H8.8"/></g></g>
<g transform="translate(82.0 87.4)"><ellipse cx="7" cy="8" rx="6.5" ry="7.8" fill="#000" stroke="#fff" stroke-width="0.9"/><g fill="none" stroke="#fff" stroke-width="1.25" stroke-linecap="square" style="color:#fff"><path d="M3.4 6.8Q3.6 3.2 7 3.2Q10.4 3.2 10.6 6.8M7 3.2V13.6M4.8 9.2H9.2"/></g></g>
<g transform="translate(82.0 103.5)"><ellipse cx="7" cy="8" rx="6.5" ry="7.8" fill="#000" stroke="#fff" stroke-width="0.9"/><g stroke="#fff" stroke-width="0.3" fill="#fff"><text x="2.6" y="13.5" font-size="14" textLength="6.6" lengthAdjust="spacingAndGlyphs">M</text><text x="9.3" y="13.5" font-size="8" textLength="2.9" lengthAdjust="spacingAndGlyphs">c</text></g></g>
<g transform="translate(108.3 71.3)"><rect x="0.5" y="0.5" width="13" height="15" rx="3.6" ry="3.6" fill="#fff" stroke="#000" stroke-width="1.1"/><g stroke="#000" stroke-width="0.35" fill="#000"><text x="2.6" y="13.5" font-size="14" textLength="6.6" lengthAdjust="spacingAndGlyphs">M</text><text x="9.3" y="13.5" font-size="8" textLength="2.9" lengthAdjust="spacingAndGlyphs">c</text></g></g>
<g transform="translate(108.3 87.4)"><rect x="0.5" y="0.5" width="13" height="15" rx="3.6" ry="3.6" fill="#fff" stroke="#000" stroke-width="1.1"/><g fill="none" stroke="#000" stroke-width="1.25" stroke-linecap="square" style="color:#000"><path d="M3 3.2Q5.6 4.4 7 6.6Q8.4 4.4 11 3.2M7 6.6V10.2M7 10.2Q5.8 12.4 3.2 13.6M7 10.2Q8.2 12.4 10.8 13.6"/></g></g>
<g transform="translate(108.3 103.5)"><rect x="0.5" y="0.5" width="13" height="15" rx="3.6" ry="3.6" fill="#fff" stroke="#000" stroke-width="1.1"/><g stroke="#000" stroke-width="0.35" fill="#000"><text x="2.6" y="13.5" font-size="13.4" textLength="5.2" lengthAdjust="spacingAndGlyphs">A</text><text x="8" y="13.5" font-size="8" textLength="3" lengthAdjust="spacingAndGlyphs">s</text></g></g>
<g transform="translate(174.3 71.3)"><rect x="0.5" y="0.5" width="13" height="15" rx="3.6" ry="3.6" fill="#fff" stroke="#000" stroke-width="1.1"/><g fill="none" stroke="#000" stroke-width="1.25" stroke-linecap="square" style="color:#000"><path d="M3.8 2.8Q11.8 3 11.6 8Q11.6 13 3.8 13.4Q7.8 11.6 7.8 8Q7.8 4.4 3.8 2.8Z" stroke-width="1"/></g></g>
<g transform="translate(174.3 87.4)"><rect x="0.5" y="0.5" width="13" height="15" rx="3.6" ry="3.6" fill="#fff" stroke="#000" stroke-width="1.1"/><g fill="none" stroke="#000" stroke-width="1.25" stroke-linecap="square" style="color:#000"><path d="M3.4 6.8Q3.6 3.2 7 3.2Q10.4 3.2 10.6 6.8M7 3.2V13.6M4.8 9.2H9.2"/></g></g>
<g transform="translate(174.3 103.5)"><rect x="0.5" y="0.5" width="13" height="15" rx="3.6" ry="3.6" fill="#fff" stroke="#000" stroke-width="1.1"/><g stroke="#000" stroke-width="0.35" fill="#000"><text x="2.6" y="13.5" font-size="13.4" textLength="5.2" lengthAdjust="spacingAndGlyphs">A</text><text x="8" y="13.5" font-size="8" textLength="3" lengthAdjust="spacingAndGlyphs">s</text></g></g>
<g transform="translate(187.8 71.3)"><ellipse cx="7" cy="8" rx="6.5" ry="7.8" fill="#000" stroke="#fff" stroke-width="0.9"/><g fill="none" stroke="#fff" stroke-width="1.25" stroke-linecap="square" style="color:#fff"><circle cx="7" cy="8" r="4.3" stroke-width="1"/><path d="M4 5L10 11M10 5L4 11" stroke-width="1"/></g></g>
<g transform="translate(187.8 87.4)"><ellipse cx="7" cy="8" rx="6.5" ry="7.8" fill="#000" stroke="#fff" stroke-width="0.9"/><g fill="none" stroke="#fff" stroke-width="1.25" stroke-linecap="square" style="color:#fff"><path d="M7 3V9.6M5 5.4L7 3L9 5.4M7 9L3.8 13.2M7 9L10.2 13.2M3.2 13.6H10.8"/></g></g>
<g transform="translate(187.8 103.5)"><ellipse cx="7" cy="8" rx="6.5" ry="7.8" fill="#000" stroke="#fff" stroke-width="0.9"/><g stroke="#fff" stroke-width="0.3" fill="#fff"><text x="2.6" y="13.5" font-size="14" textLength="6.6" lengthAdjust="spacingAndGlyphs">M</text><text x="9.3" y="13.5" font-size="8" textLength="2.9" lengthAdjust="spacingAndGlyphs">c</text></g></g>
<g transform="translate(276.1 71.3)"><ellipse cx="7" cy="8" rx="6.5" ry="7.8" fill="#147a14" stroke="#d8f4d8" stroke-width="0.9"/><g fill="none" stroke="#fff" stroke-width="1.25" stroke-linecap="square" style="color:#fff"><path d="M6 2.6V10.4M6 7L9.6 3.4M6 7L9.8 9.6"/><ellipse cx="6" cy="12" rx="1.9" ry="1.5"/></g></g>
<g transform="translate(276.1 87.4)"><ellipse cx="7" cy="8" rx="6.5" ry="7.8" fill="#000" stroke="#fff" stroke-width="0.9"/><g fill="none" stroke="#fff" stroke-width="1.25" stroke-linecap="square" style="color:#fff"><path d="M9.8 5.4A3.9 3.9 0 1 0 9.8 10.4M6.9 5.6V13.6M3.8 9.3H10.4"/></g></g>
<g transform="translate(276.1 103.5)"><ellipse cx="7" cy="8" rx="6.5" ry="7.8" fill="#147a14" stroke="#d8f4d8" stroke-width="0.9"/><g stroke="#fff" stroke-width="0.3" fill="#fff"><text x="2.6" y="13.5" font-size="14" textLength="6.6" lengthAdjust="spacingAndGlyphs">M</text><text x="9.3" y="13.5" font-size="8" textLength="2.9" lengthAdjust="spacingAndGlyphs">c</text></g></g>
<g transform="translate(289.6 71.3)"><rect x="0.5" y="0.5" width="13" height="15" rx="3.6" ry="3.6" fill="#fff" stroke="#000" stroke-width="1.1"/><g fill="none" stroke="#000" stroke-width="1.25" stroke-linecap="square" style="color:#000"><circle cx="7" cy="7" r="3"/><path d="M7 4V13M4 7H10M4 13.6H10M5 2.6L6.2 4M9 2.6L7.8 4"/></g></g>
<g transform="translate(289.6 87.4)"><rect x="0.5" y="0.5" width="13" height="15" rx="3.6" ry="3.6" fill="#fff" stroke="#000" stroke-width="1.1"/><g fill="none" stroke="#000" stroke-width="1.25" stroke-linecap="square" style="color:#000"><path d="M3 3.2Q5.6 4.4 7 6.6Q8.4 4.4 11 3.2M7 6.6V10.2M7 10.2Q5.8 12.4 3.2 13.6M7 10.2Q8.2 12.4 10.8 13.6"/></g></g>
<g transform="translate(289.6 103.5)"><rect x="0.5" y="0.5" width="13" height="15" rx="3.6" ry="3.6" fill="#fff" stroke="#000" stroke-width="1.1"/><g stroke="#000" stroke-width="0.35" fill="#000"><text x="2.6" y="13.5" font-size="13.4" textLength="5.2" lengthAdjust="spacingAndGlyphs">A</text><text x="8" y="13.5" font-size="8" textLength="3" lengthAdjust="spacingAndGlyphs">s</text></g></g>
<g transform="translate(417.6 71.3)"><ellipse cx="7" cy="8" rx="6.5" ry="7.8" fill="#147a14" stroke="#d8f4d8" stroke-width="0.9"/><g fill="none" stroke="#fff" stroke-width="1.25" stroke-linecap="square" style="color:#fff"><path d="M6 2.6V10.4M6 7L9.6 3.4M6 7L9.8 9.6"/><ellipse cx="6" cy="12" rx="1.9" ry="1.5"/></g></g>
<g transform="translate(417.6 87.4)"><ellipse cx="7" cy="8" rx="6.5" ry="7.8" fill="#000" stroke="#fff" stroke-width="0.9"/><g fill="none" stroke="#fff" stroke-width="1.25" stroke-linecap="square" style="color:#fff"><path d="M3.4 6.8Q3.6 3.2 7 3.2Q10.4 3.2 10.6 6.8M7 3.2V13.6M4.8 9.2H9.2"/></g></g>
<g transform="translate(417.6 103.5)"><ellipse cx="7" cy="8" rx="6.5" ry="7.8" fill="#147a14" stroke="#d8f4d8" stroke-width="0.9"/><g stroke="#fff" stroke-width="0.3" fill="#fff"><text x="2.6" y="13.5" font-size="14" textLength="6.6" lengthAdjust="spacingAndGlyphs">M</text><text x="9.3" y="13.5" font-size="8" textLength="2.9" lengthAdjust="spacingAndGlyphs">c</text></g></g>
<g transform="translate(444.5 87.4)"><rect x="0.5" y="0.5" width="13" height="15" rx="3.6" ry="3.6" fill="#fff" stroke="#000" stroke-width="1.1"/><g stroke="#000" stroke-width="0.35" fill="#000"><text x="2.6" y="13.5" font-size="13.4" textLength="5.2" lengthAdjust="spacingAndGlyphs">A</text><text x="8" y="13.5" font-size="8" textLength="3" lengthAdjust="spacingAndGlyphs">s</text></g></g>
<g transform="translate(444.5 103.5)"><rect x="0.5" y="0.5" width="13" height="15" rx="3.6" ry="3.6" fill="#fff" stroke="#000" stroke-width="1.1"/><g stroke="#000" stroke-width="0.35" fill="#000"><text x="2.6" y="13.5" font-size="13.4" textLength="5.2" lengthAdjust="spacingAndGlyphs">A</text><text x="8" y="13.5" font-size="8" textLength="3" lengthAdjust="spacingAndGlyphs">s</text></g></g>
<g transform="translate(458.2 71.3)"><rect x="0.5" y="0.5" width="13" height="15" rx="3.6" ry="3.6" fill="#fff" stroke="#000" stroke-width="1.1"/><g fill="none" stroke="#000" stroke-width="1.25" stroke-linecap="square" style="color:#000"><path d="M4.3 3.6Q6.8 4.8 6.4 7.2Q6 9.4 4.3 11.4H9.8M7.9 9.2V13.6"/></g></g>
<g transform="translate(458.2 87.4)"><rect x="0.5" y="0.5" width="13" height="15" rx="3.6" ry="3.6" fill="#fff" stroke="#000" stroke-width="1.1"/><g stroke="#000" stroke-width="0.35" fill="#000"><text x="2.6" y="13.5" font-size="14" textLength="6.6" lengthAdjust="spacingAndGlyphs">M</text><text x="9.3" y="13.5" font-size="8" textLength="2.9" lengthAdjust="spacingAndGlyphs">c</text></g></g>
<g transform="translate(458.2 103.5)"><rect x="0.5" y="0.5" width="13" height="15" rx="3.6" ry="3.6" fill="#fff" stroke="#000" stroke-width="1.1"/><g stroke="#000" stroke-width="0.35" fill="#000"><text x="2.6" y="13.5" font-size="13.4" textLength="5.2" lengthAdjust="spacingAndGlyphs">A</text><text x="8" y="13.5" font-size="8" textLength="3" lengthAdjust="spacingAndGlyphs">s</text></g></g>
<g transform="translate(475.7 71.3)"><rect x="0.5" y="0.5" width="13" height="15" rx="3.6" ry="3.6" fill="#fff" stroke="#000" stroke-width="1.1"/><g fill="none" stroke="#000" stroke-width="1.25" stroke-linecap="square" style="color:#000"><path d="M9.8 5.4A3.9 3.9 0 1 0 9.8 10.4M6.9 5.6V13.6M3.8 9.3H10.4"/></g></g>
<g transform="translate(475.7 87.4)"><rect x="0.5" y="0.5" width="13" height="15" rx="3.6" ry="3.6" fill="#fff" stroke="#000" stroke-width="1.1"/><g fill="none" stroke="#000" stroke-width="1.25" stroke-linecap="square" style="color:#000"><path d="M7 2.4V10M5.5 4.4L7 2.4L8.5 4.4M3.6 7.2L10.4 13.6M10.4 7.2L3.6 13.6M3.6 7.2Q7 4 10.4 7.2" stroke-width="1.1"/></g></g>
<g transform="translate(475.7 103.5)"><rect x="0.5" y="0.5" width="13" height="15" rx="3.6" ry="3.6" fill="#fff" stroke="#000" stroke-width="1.1"/><g stroke="#000" stroke-width="0.35" fill="#000"><text x="2.6" y="13.5" font-size="13.4" textLength="5.2" lengthAdjust="spacingAndGlyphs">A</text><text x="8" y="13.5" font-size="8" textLength="3" lengthAdjust="spacingAndGlyphs">s</text></g></g>
<g transform="translate(509.9 87.4)"><ellipse cx="7" cy="8" rx="6.5" ry="7.8" fill="#000" stroke="#fff" stroke-width="0.9"/><g stroke="#fff" stroke-width="0.3" fill="#fff"><text x="2.6" y="13.5" font-size="14" textLength="6.6" lengthAdjust="spacingAndGlyphs">M</text><text x="9.3" y="13.5" font-size="8" textLength="2.9" lengthAdjust="spacingAndGlyphs">c</text></g></g>
<g transform="translate(509.9 103.5)"><ellipse cx="7" cy="8" rx="6.5" ry="7.8" fill="#000" stroke="#fff" stroke-width="0.9"/><g stroke="#fff" stroke-width="0.3" fill="#fff"><text x="2.6" y="13.5" font-size="14" textLength="6.6" lengthAdjust="spacingAndGlyphs">M</text><text x="9.3" y="13.5" font-size="8" textLength="2.9" lengthAdjust="spacingAndGlyphs">c</text></g></g>
<g transform="translate(595.4 71.3)"><rect x="0.5" y="0.5" width="13" height="15" rx="3.6" ry="3.6" fill="#fff" stroke="#000" stroke-width="1.1"/><g fill="none" stroke="#000" stroke-width="1.25" stroke-linecap="square" style="color:#000"><path d="M7 2.4V10M5.5 4.4L7 2.4L8.5 4.4M3.6 7.2L10.4 13.6M10.4 7.2L3.6 13.6M3.6 7.2Q7 4 10.4 7.2" stroke-width="1.1"/></g></g>
<g transform="translate(595.4 87.4)"><rect x="0.5" y="0.5" width="13" height="15" rx="3.6" ry="3.6" fill="#fff" stroke="#000" stroke-width="1.1"/><g fill="none" stroke="#000" stroke-width="1.25" stroke-linecap="square" style="color:#000"><path d="M3.4 6.8Q3.6 3.2 7 3.2Q10.4 3.2 10.6 6.8M7 3.2V13.6M4.8 9.2H9.2"/></g></g>
<g transform="translate(595.4 103.5)"><rect x="0.5" y="0.5" width="13" height="15" rx="3.6" ry="3.6" fill="#fff" stroke="#000" stroke-width="1.1"/><g stroke="#000" stroke-width="0.35" fill="#000"><text x="2.6" y="13.5" font-size="13.4" textLength="5.2" lengthAdjust="spacingAndGlyphs">A</text><text x="8" y="13.5" font-size="8" textLength="3" lengthAdjust="spacingAndGlyphs">s</text></g></g>
<g transform="translate(632.6 71.3)"><ellipse cx="7" cy="8" rx="6.5" ry="7.8" fill="#000" stroke="#fff" stroke-width="0.9"/><g fill="none" stroke="#fff" stroke-width="1.25" stroke-linecap="square" style="color:#fff"><circle cx="7" cy="6.8" r="3.6" stroke-width="1.3"/><path d="M5.6 10L4 13.2H6.2M8.4 10L10 13.2H7.8"/></g></g>
<g transform="translate(632.6 87.4)"><ellipse cx="7" cy="8" rx="6.5" ry="7.8" fill="#000" stroke="#fff" stroke-width="0.9"/><g fill="none" stroke="#fff" stroke-width="1.25" stroke-linecap="square" style="color:#fff"><circle cx="7" cy="8" r="4.3" stroke-width="1"/><path d="M4 5L10 11M10 5L4 11" stroke-width="1"/></g></g>
<g transform="translate(632.6 103.5)"><ellipse cx="7" cy="8" rx="6.5" ry="7.8" fill="#000" stroke="#fff" stroke-width="0.9"/><g stroke="#fff" stroke-width="0.3" fill="#fff"><text x="2.6" y="13.5" font-size="14" textLength="6.6" lengthAdjust="spacingAndGlyphs">M</text><text x="9.3" y="13.5" font-size="8" textLength="2.9" lengthAdjust="spacingAndGlyphs">c</text></g></g>
<g transform="translate(646.0 71.3)"><rect x="0.5" y="0.5" width="13" height="15" rx="3.6" ry="3.6" fill="#fff" stroke="#000" stroke-width="1.1"/><g fill="none" stroke="#000" stroke-width="1.25" stroke-linecap="square" style="color:#000"><path d="M4.3 3.6Q6.8 4.8 6.4 7.2Q6 9.4 4.3 11.4H9.8M7.9 9.2V13.6"/></g></g>
<g transform="translate(646.0 87.4)"><rect x="0.5" y="0.5" width="13" height="15" rx="3.6" ry="3.6" fill="#fff" stroke="#000" stroke-width="1.1"/><g fill="none" stroke="#000" stroke-width="1.25" stroke-linecap="square" style="color:#000"><circle cx="7" cy="7" r="3"/><path d="M7 4V13M4 7H10M4 13.6H10M5 2.6L6.2 4M9 2.6L7.8 4"/></g></g>
<g transform="translate(646.0 103.5)"><rect x="0.5" y="0.5" width="13" height="15" rx="3.6" ry="3.6" fill="#fff" stroke="#000" stroke-width="1.1"/><g stroke="#000" stroke-width="0.35" fill="#000"><text x="2.6" y="13.5" font-size="13.4" textLength="5.2" lengthAdjust="spacingAndGlyphs">A</text><text x="8" y="13.5" font-size="8" textLength="3" lengthAdjust="spacingAndGlyphs">s</text></g></g>
<g transform="translate(663.5 71.3)"><ellipse cx="7" cy="8" rx="6.5" ry="7.8" fill="#8c8c14" stroke="#f0f060" stroke-width="0.9"/><g fill="none" stroke="#fff" stroke-width="1.25" stroke-linecap="square" style="color:#fff"><circle cx="7" cy="8" r="3.7" stroke-width="0.95"/><circle cx="7" cy="8" r="0.7" fill="currentColor"/></g></g>
<g transform="translate(663.5 87.4)"><ellipse cx="7" cy="8" rx="6.5" ry="7.8" fill="#000" stroke="#fff" stroke-width="0.9"/><g fill="none" stroke="#fff" stroke-width="1.25" stroke-linecap="square" style="color:#fff"><path d="M9.8 5.4A3.9 3.9 0 1 0 9.8 10.4M6.9 5.6V13.6M3.8 9.3H10.4"/></g></g>
<g transform="translate(663.5 103.5)"><ellipse cx="7" cy="8" rx="6.5" ry="7.8" fill="#8c8c14" stroke="#f0f060" stroke-width="0.9"/><g stroke="#fff" stroke-width="0.3" fill="#fff"><text x="2.6" y="13.5" font-size="14" textLength="6.6" lengthAdjust="spacingAndGlyphs">M</text><text x="9.3" y="13.5" font-size="8" textLength="2.9" lengthAdjust="spacingAndGlyphs">c</text></g></g>
<g transform="translate(690.5 71.3)"><ellipse cx="7" cy="8" rx="6.5" ry="7.8" fill="#8c148c" stroke="#f4d0f4" stroke-width="0.9"/><g fill="none" stroke="#fff" stroke-width="1.25" stroke-linecap="square" style="color:#fff"><circle cx="7" cy="6.6" r="2.3"/><path d="M4.4 2.4Q7 5.2 9.6 2.4M7 8.9V13.6M5 11.6H9"/></g></g>
<g transform="translate(690.5 87.4)"><ellipse cx="7" cy="8" rx="6.5" ry="7.8" fill="#000" stroke="#fff" stroke-width="0.9"/><g fill="none" stroke="#fff" stroke-width="1.25" stroke-linecap="square" style="color:#fff"><path d="M9.8 5.4A3.9 3.9 0 1 0 9.8 10.4M6.9 5.6V13.6M3.8 9.3H10.4"/></g></g>
<g transform="translate(690.5 103.5)"><ellipse cx="7" cy="8" rx="6.5" ry="7.8" fill="#8c148c" stroke="#f4d0f4" stroke-width="0.9"/><g stroke="#fff" stroke-width="0.3" fill="#fff"><text x="2.6" y="13.5" font-size="14" textLength="6.6" lengthAdjust="spacingAndGlyphs">M</text><text x="9.3" y="13.5" font-size="8" textLength="2.9" lengthAdjust="spacingAndGlyphs">c</text></g></g>
<g transform="translate(726.1 71.3)"><ellipse cx="7" cy="8" rx="6.5" ry="7.8" fill="#148a94" stroke="#c8f4f8" stroke-width="0.9"/><g fill="none" stroke="#fff" stroke-width="1.25" stroke-linecap="square" style="color:#fff"><path d="M7 2.8V13.6M3.6 3.2Q3.4 9.2 7 9.2Q10.6 9.2 10.4 3.2M5 11.6H9"/></g></g>
<g transform="translate(726.1 87.4)"><ellipse cx="7" cy="8" rx="6.5" ry="7.8" fill="#000" stroke="#fff" stroke-width="0.9"/><g fill="none" stroke="#fff" stroke-width="1.25" stroke-linecap="square" style="color:#fff"><path d="M7 3V9.6M5 5.4L7 3L9 5.4M7 9L3.8 13.2M7 9L10.2 13.2M3.2 13.6H10.8"/></g></g>
<g transform="translate(726.1 103.5)"><ellipse cx="7" cy="8" rx="6.5" ry="7.8" fill="#148a94" stroke="#c8f4f8" stroke-width="0.9"/><g stroke="#fff" stroke-width="0.3" fill="#fff"><text x="2.6" y="13.5" font-size="14" textLength="6.6" lengthAdjust="spacingAndGlyphs">M</text><text x="9.3" y="13.5" font-size="8" textLength="2.9" lengthAdjust="spacingAndGlyphs">c</text></g></g>
<g transform="translate(739.6 71.3)"><ellipse cx="7" cy="8" rx="6.5" ry="7.8" fill="#000" stroke="#fff" stroke-width="0.9"/><g stroke="#fff" stroke-width="0.3" fill="#fff"><text x="2.6" y="13.5" font-size="14" textLength="6.6" lengthAdjust="spacingAndGlyphs">M</text><text x="9.3" y="13.5" font-size="8" textLength="2.9" lengthAdjust="spacingAndGlyphs">c</text></g></g>
<g transform="translate(739.6 87.4)"><ellipse cx="7" cy="8" rx="6.5" ry="7.8" fill="#000" stroke="#fff" stroke-width="0.9"/><g fill="none" stroke="#fff" stroke-width="1.25" stroke-linecap="square" style="color:#fff"><circle cx="7" cy="7" r="3"/><path d="M7 4V13M4 7H10M4 13.6H10M5 2.6L6.2 4M9 2.6L7.8 4"/></g></g>
<g transform="translate(739.6 103.5)"><ellipse cx="7" cy="8" rx="6.5" ry="7.8" fill="#000" stroke="#fff" stroke-width="0.9"/><g stroke="#fff" stroke-width="0.3" fill="#fff"><text x="2.6" y="13.5" font-size="14" textLength="6.6" lengthAdjust="spacingAndGlyphs">M</text><text x="9.3" y="13.5" font-size="8" textLength="2.9" lengthAdjust="spacingAndGlyphs">c</text></g></g>
<g transform="translate(752.8 71.3)"><ellipse cx="7" cy="8" rx="6.5" ry="7.8" fill="#000" stroke="#fff" stroke-width="0.9"/><g fill="none" stroke="#fff" stroke-width="1.25" stroke-linecap="square" style="color:#fff"><path d="M7 3V13.6M3.2 6.8H10.8M4.2 4L9.8 9.6M9.8 4L4.2 9.6M5.2 12H8.8"/></g></g>
<g transform="translate(752.8 87.4)"><ellipse cx="7" cy="8" rx="6.5" ry="7.8" fill="#000" stroke="#fff" stroke-width="0.9"/><g fill="none" stroke="#fff" stroke-width="1.25" stroke-linecap="square" style="color:#fff"><path d="M7 3V9.6M5 5.4L7 3L9 5.4M7 9L3.8 13.2M7 9L10.2 13.2M3.2 13.6H10.8"/></g></g>
<g transform="translate(752.8 103.5)"><ellipse cx="7" cy="8" rx="6.5" ry="7.8" fill="#000" stroke="#fff" stroke-width="0.9"/><g stroke="#fff" stroke-width="0.3" fill="#fff"><text x="2.6" y="13.5" font-size="14" textLength="6.6" lengthAdjust="spacingAndGlyphs">M</text><text x="9.3" y="13.5" font-size="8" textLength="2.9" lengthAdjust="spacingAndGlyphs">c</text></g></g>
<g transform="translate(805.2 71.3)"><ellipse cx="7" cy="8" rx="6.5" ry="7.8" fill="#8c8c14" stroke="#f0f060" stroke-width="0.9"/><g fill="none" stroke="#fff" stroke-width="1.25" stroke-linecap="square" style="color:#fff"><circle cx="7" cy="8" r="3.7" stroke-width="0.95"/><circle cx="7" cy="8" r="0.7" fill="currentColor"/></g></g>
<g transform="translate(805.2 87.4)"><ellipse cx="7" cy="8" rx="6.5" ry="7.8" fill="#000" stroke="#fff" stroke-width="0.9"/><g fill="none" stroke="#fff" stroke-width="1.25" stroke-linecap="square" style="color:#fff"><path d="M3.4 6.8Q3.6 3.2 7 3.2Q10.4 3.2 10.6 6.8M7 3.2V13.6M4.8 9.2H9.2"/></g></g>
<g transform="translate(805.2 103.5)"><ellipse cx="7" cy="8" rx="6.5" ry="7.8" fill="#8c8c14" stroke="#f0f060" stroke-width="0.9"/><g stroke="#fff" stroke-width="0.3" fill="#fff"><text x="2.6" y="13.5" font-size="14" textLength="6.6" lengthAdjust="spacingAndGlyphs">M</text><text x="9.3" y="13.5" font-size="8" textLength="2.9" lengthAdjust="spacingAndGlyphs">c</text></g></g>
<g transform="translate(832.4 71.3)"><ellipse cx="7" cy="8" rx="6.5" ry="7.8" fill="#8c148c" stroke="#f4d0f4" stroke-width="0.9"/><g fill="none" stroke="#fff" stroke-width="1.25" stroke-linecap="square" style="color:#fff"><circle cx="7" cy="6.6" r="2.3"/><path d="M4.4 2.4Q7 5.2 9.6 2.4M7 8.9V13.6M5 11.6H9"/></g></g>
<g transform="translate(832.4 87.4)"><ellipse cx="7" cy="8" rx="6.5" ry="7.8" fill="#000" stroke="#fff" stroke-width="0.9"/><g fill="none" stroke="#fff" stroke-width="1.25" stroke-linecap="square" style="color:#fff"><path d="M3.4 6.8Q3.6 3.2 7 3.2Q10.4 3.2 10.6 6.8M7 3.2V13.6M4.8 9.2H9.2"/></g></g>
<g transform="translate(832.4 103.5)"><ellipse cx="7" cy="8" rx="6.5" ry="7.8" fill="#8c148c" stroke="#f4d0f4" stroke-width="0.9"/><g stroke="#fff" stroke-width="0.3" fill="#fff"><text x="2.6" y="13.5" font-size="14" textLength="6.6" lengthAdjust="spacingAndGlyphs">M</text><text x="9.3" y="13.5" font-size="8" textLength="2.9" lengthAdjust="spacingAndGlyphs">c</text></g></g>
<g transform="translate(932.4 71.3)"><rect x="0.5" y="0.5" width="13" height="15" rx="3.6" ry="3.6" fill="#fff" stroke="#000" stroke-width="1.1"/><g fill="none" stroke="#000" stroke-width="1.25" stroke-linecap="square" style="color:#000"><path d="M3.8 2.8Q11.8 3 11.6 8Q11.6 13 3.8 13.4Q7.8 11.6 7.8 8Q7.8 4.4 3.8 2.8Z" stroke-width="1"/></g></g>
<g transform="translate(932.4 87.4)"><rect x="0.5" y="0.5" width="13" height="15" rx="3.6" ry="3.6" fill="#fff" stroke="#000" stroke-width="1.1"/><g fill="none" stroke="#000" stroke-width="1.25" stroke-linecap="square" style="color:#000"><path d="M7 3V9.6M5 5.4L7 3L9 5.4M7 9L3.8 13.2M7 9L10.2 13.2M3.2 13.6H10.8"/></g></g>
<g transform="translate(932.4 103.5)"><rect x="0.5" y="0.5" width="13" height="15" rx="3.6" ry="3.6" fill="#fff" stroke="#000" stroke-width="1.1"/><g stroke="#000" stroke-width="0.35" fill="#000"><text x="2.6" y="13.5" font-size="13.4" textLength="5.2" lengthAdjust="spacingAndGlyphs">A</text><text x="8" y="13.5" font-size="8" textLength="3" lengthAdjust="spacingAndGlyphs">s</text></g></g>
<g transform="translate(949.4 87.4)"><ellipse cx="7" cy="8" rx="6.5" ry="7.8" fill="#000" stroke="#fff" stroke-width="0.9"/><g fill="none" stroke="#fff" stroke-width="1.25" stroke-linecap="square" style="color:#fff"><circle cx="7" cy="7" r="3"/><path d="M7 4V13M4 7H10M4 13.6H10M5 2.6L6.2 4M9 2.6L7.8 4"/></g></g>
<g transform="translate(949.4 103.5)"><ellipse cx="7" cy="8" rx="6.5" ry="7.8" fill="#000" stroke="#fff" stroke-width="0.9"/><g stroke="#fff" stroke-width="0.3" fill="#fff"><text x="2.6" y="13.5" font-size="14" textLength="6.6" lengthAdjust="spacingAndGlyphs">M</text><text x="9.3" y="13.5" font-size="8" textLength="2.9" lengthAdjust="spacingAndGlyphs">c</text></g></g>
<g transform="translate(1009.3 71.3)"><rect x="0.5" y="0.5" width="13" height="15" rx="3.6" ry="3.6" fill="#fff" stroke="#000" stroke-width="1.1"/><g fill="none" stroke="#000" stroke-width="1.25" stroke-linecap="square" style="color:#000"><path d="M9.8 5.4A3.9 3.9 0 1 0 9.8 10.4M6.9 5.6V13.6M3.8 9.3H10.4"/></g></g>
<g transform="translate(1009.3 87.4)"><rect x="0.5" y="0.5" width="13" height="15" rx="3.6" ry="3.6" fill="#fff" stroke="#000" stroke-width="1.1"/><g fill="none" stroke="#000" stroke-width="1.25" stroke-linecap="square" style="color:#000"><path d="M3.4 3.4V9.8H11.4M5 5.6H11.4M6.6 5.6V13M10 5.6V13M4.2 13H11.8" stroke-width="1.1"/></g></g>
<g transform="translate(1009.3 103.5)"><rect x="0.5" y="0.5" width="13" height="15" rx="3.6" ry="3.6" fill="#fff" stroke="#000" stroke-width="1.1"/><g stroke="#000" stroke-width="0.35" fill="#000"><text x="2.6" y="13.5" font-size="13.4" textLength="5.2" lengthAdjust="spacingAndGlyphs">A</text><text x="8" y="13.5" font-size="8" textLength="3" lengthAdjust="spacingAndGlyphs">s</text></g></g>
<g transform="translate(1034.1 71.3)"><ellipse cx="7" cy="8" rx="6.5" ry="7.8" fill="#8c1414" stroke="#f4d0d0" stroke-width="0.9"/><g fill="none" stroke="#fff" stroke-width="1.25" stroke-linecap="square" style="color:#fff"><path d="M5 2.6V10M3.4 4.6H7.2M5 7.4Q8 5.2 9.6 7.4Q10.6 9.6 8 11.4Q7.4 13 9.8 13"/></g></g>
<g transform="translate(1034.1 87.4)"><ellipse cx="7" cy="8" rx="6.5" ry="7.8" fill="#147a14" stroke="#d8f4d8" stroke-width="0.9"/><g fill="none" stroke="#fff" stroke-width="1.25" stroke-linecap="square" style="color:#fff"><path d="M6 2.6V10.4M6 7L9.6 3.4M6 7L9.8 9.6"/><ellipse cx="6" cy="12" rx="1.9" ry="1.5"/></g></g>
<g transform="translate(1034.1 103.5)"><ellipse cx="7" cy="8" rx="6.5" ry="7.8" fill="#8c1414" stroke="#f4d0d0" stroke-width="0.9"/><g stroke="#fff" stroke-width="0.3" fill="#fff"><text x="2.6" y="13.5" font-size="14" textLength="6.6" lengthAdjust="spacingAndGlyphs">M</text><text x="9.3" y="13.5" font-size="8" textLength="2.9" lengthAdjust="spacingAndGlyphs">c</text></g></g>
<g transform="translate(1047.2 71.3)"><ellipse cx="7" cy="8" rx="6.5" ry="7.8" fill="#8c1414" stroke="#f4d0d0" stroke-width="0.9"/><g fill="none" stroke="#fff" stroke-width="1.25" stroke-linecap="square" style="color:#fff"><path d="M4 2.8Q4 7 7 7Q10 7 10 2.8M7 7V13.6M5 11H9"/><circle cx="7" cy="4.6" r="1.7"/></g></g>
<g transform="translate(1047.2 87.4)"><ellipse cx="7" cy="8" rx="6.5" ry="7.8" fill="#000" stroke="#fff" stroke-width="0.9"/><g fill="none" stroke="#fff" stroke-width="1.25" stroke-linecap="square" style="color:#fff"><path d="M7 3V13.6M3.2 6.8H10.8M4.2 4L9.8 9.6M9.8 4L4.2 9.6M5.2 12H8.8"/></g></g>
<g transform="translate(1047.2 103.5)"><ellipse cx="7" cy="8" rx="6.5" ry="7.8" fill="#8c1414" stroke="#f4d0d0" stroke-width="0.9"/><g stroke="#fff" stroke-width="0.3" fill="#fff"><text x="2.6" y="13.5" font-size="14" textLength="6.6" lengthAdjust="spacingAndGlyphs">M</text><text x="9.3" y="13.5" font-size="8" textLength="2.9" lengthAdjust="spacingAndGlyphs">c</text></g></g>
<g transform="translate(1087.2 71.3)"><ellipse cx="7" cy="8" rx="6.5" ry="7.8" fill="#147a14" stroke="#d8f4d8" stroke-width="0.9"/><g fill="none" stroke="#fff" stroke-width="1.25" stroke-linecap="square" style="color:#fff"><path d="M6 2.6V10.4M6 7L9.6 3.4M6 7L9.8 9.6"/><ellipse cx="6" cy="12" rx="1.9" ry="1.5"/></g></g>
<g transform="translate(1087.2 87.4)"><ellipse cx="7" cy="8" rx="6.5" ry="7.8" fill="#000" stroke="#fff" stroke-width="0.9"/><g fill="none" stroke="#fff" stroke-width="1.25" stroke-linecap="square" style="color:#fff"><path d="M7 3V9.6M5 5.4L7 3L9 5.4M7 9L3.8 13.2M7 9L10.2 13.2M3.2 13.6H10.8"/></g></g>
<g transform="translate(1087.2 103.5)"><ellipse cx="7" cy="8" rx="6.5" ry="7.8" fill="#147a14" stroke="#d8f4d8" stroke-width="0.9"/><g stroke="#fff" stroke-width="0.3" fill="#fff"><text x="2.6" y="13.5" font-size="14" textLength="6.6" lengthAdjust="spacingAndGlyphs">M</text><text x="9.3" y="13.5" font-size="8" textLength="2.9" lengthAdjust="spacingAndGlyphs">c</text></g></g>
<g transform="translate(1129.3 71.3)"><rect x="0.5" y="0.5" width="13" height="15" rx="3.6" ry="3.6" fill="#fff" stroke="#000" stroke-width="1.1"/><g fill="none" stroke="#000" stroke-width="1.25" stroke-linecap="square" style="color:#000"><path d="M3.4 6.8Q3.6 3.2 7 3.2Q10.4 3.2 10.6 6.8M7 3.2V13.6M4.8 9.2H9.2"/></g></g>
<g transform="translate(1129.3 87.4)"><rect x="0.5" y="0.5" width="13" height="15" rx="3.6" ry="3.6" fill="#fff" stroke="#000" stroke-width="1.1"/><g fill="none" stroke="#000" stroke-width="1.25" stroke-linecap="square" style="color:#000"><path d="M3.4 3.4V9.8H11.4M5 5.6H11.4M6.6 5.6V13M10 5.6V13M4.2 13H11.8" stroke-width="1.1"/></g></g>
<g transform="translate(1129.3 103.5)"><rect x="0.5" y="0.5" width="13" height="15" rx="3.6" ry="3.6" fill="#fff" stroke="#000" stroke-width="1.1"/><g stroke="#000" stroke-width="0.35" fill="#000"><text x="2.6" y="13.5" font-size="13.4" textLength="5.2" lengthAdjust="spacingAndGlyphs">A</text><text x="8" y="13.5" font-size="8" textLength="3" lengthAdjust="spacingAndGlyphs">s</text></g></g>
<g transform="translate(1169.8 71.3)"><ellipse cx="7" cy="8" rx="6.5" ry="7.8" fill="#0a0acc" stroke="#3030c0" stroke-width="0.9"/><g fill="none" stroke="#101070" stroke-width="1.25" stroke-linecap="square" style="color:#101070"><path d="M4.4 3.4V9M9.6 3.4V9M4.4 6H9.6M7 6V11"/><circle cx="7" cy="12.2" r="1.3"/></g></g>
<g transform="translate(1169.8 87.4)"><ellipse cx="7" cy="8" rx="6.5" ry="7.8" fill="#000" stroke="#fff" stroke-width="0.9"/><g fill="none" stroke="#fff" stroke-width="1.25" stroke-linecap="square" style="color:#fff"><path d="M9.8 5.4A3.9 3.9 0 1 0 9.8 10.4M6.9 5.6V13.6M3.8 9.3H10.4"/></g></g>
<g transform="translate(1169.8 103.5)"><ellipse cx="7" cy="8" rx="6.5" ry="7.8" fill="#0a0acc" stroke="#3030c0" stroke-width="0.9"/><g stroke="#101070" stroke-width="0.35" fill="#101070"><text x="2.6" y="13.5" font-size="14" textLength="6.6" lengthAdjust="spacingAndGlyphs">M</text><text x="9.3" y="13.5" font-size="8" textLength="2.9" lengthAdjust="spacingAndGlyphs">c</text></g></g>
<g transform="translate(1183.4 71.3)"><ellipse cx="7" cy="8" rx="6.5" ry="7.8" fill="#148a94" stroke="#c8f4f8" stroke-width="0.9"/><g fill="none" stroke="#fff" stroke-width="1.25" stroke-linecap="square" style="color:#fff"><path d="M7 2.8V13.6M3.6 3.2Q3.4 9.2 7 9.2Q10.6 9.2 10.4 3.2M5 11.6H9"/></g></g>
<g transform="translate(1183.4 87.4)"><ellipse cx="7" cy="8" rx="6.5" ry="7.8" fill="#000" stroke="#fff" stroke-width="0.9"/><g fill="none" stroke="#fff" stroke-width="1.25" stroke-linecap="square" style="color:#fff"><circle cx="7" cy="6.8" r="3.6" stroke-width="1.3"/><path d="M5.6 10L4 13.2H6.2M8.4 10L10 13.2H7.8"/></g></g>
<g transform="translate(1183.4 103.5)"><ellipse cx="7" cy="8" rx="6.5" ry="7.8" fill="#148a94" stroke="#c8f4f8" stroke-width="0.9"/><g stroke="#fff" stroke-width="0.3" fill="#fff"><text x="2.6" y="13.5" font-size="14" textLength="6.6" lengthAdjust="spacingAndGlyphs">M</text><text x="9.3" y="13.5" font-size="8" textLength="2.9" lengthAdjust="spacingAndGlyphs">c</text></g></g>
<g transform="translate(1196.7 71.3)"><ellipse cx="7" cy="8" rx="6.5" ry="7.8" fill="#000" stroke="#fff" stroke-width="0.9"/><g fill="none" stroke="#fff" stroke-width="1.25" stroke-linecap="square" style="color:#fff"><path d="M7 3V13.6M3.2 6.8H10.8M4.2 4L9.8 9.6M9.8 4L4.2 9.6M5.2 12H8.8"/></g></g>
<g transform="translate(1196.7 87.4)"><ellipse cx="7" cy="8" rx="6.5" ry="7.8" fill="#000" stroke="#fff" stroke-width="0.9"/><g fill="none" stroke="#fff" stroke-width="1.25" stroke-linecap="square" style="color:#fff"><circle cx="7" cy="6.8" r="3.6" stroke-width="1.3"/><path d="M5.6 10L4 13.2H6.2M8.4 10L10 13.2H7.8"/></g></g>
<g transform="translate(1196.7 103.5)"><ellipse cx="7" cy="8" rx="6.5" ry="7.8" fill="#000" stroke="#fff" stroke-width="0.9"/><g stroke="#fff" stroke-width="0.3" fill="#fff"><text x="2.6" y="13.5" font-size="14" textLength="6.6" lengthAdjust="spacingAndGlyphs">M</text><text x="9.3" y="13.5" font-size="8" textLength="2.9" lengthAdjust="spacingAndGlyphs">c</text></g></g>
<g transform="translate(1259.6 71.3)"><ellipse cx="7" cy="8" rx="6.5" ry="7.8" fill="#148a94" stroke="#c8f4f8" stroke-width="0.9"/><g fill="none" stroke="#fff" stroke-width="1.25" stroke-linecap="square" style="color:#fff"><circle cx="7" cy="5.6" r="2.8"/><path d="M7 8.4V13.6M5 11.2H9"/></g></g>
<g transform="translate(1259.6 87.4)"><ellipse cx="7" cy="8" rx="6.5" ry="7.8" fill="#000" stroke="#fff" stroke-width="0.9"/><g fill="none" stroke="#fff" stroke-width="1.25" stroke-linecap="square" style="color:#fff"><path d="M9.8 5.4A3.9 3.9 0 1 0 9.8 10.4M6.9 5.6V13.6M3.8 9.3H10.4"/></g></g>
<g transform="translate(1259.6 103.5)"><ellipse cx="7" cy="8" rx="6.5" ry="7.8" fill="#148a94" stroke="#c8f4f8" stroke-width="0.9"/><g stroke="#fff" stroke-width="0.3" fill="#fff"><text x="2.6" y="13.5" font-size="14" textLength="6.6" lengthAdjust="spacingAndGlyphs">M</text><text x="9.3" y="13.5" font-size="8" textLength="2.9" lengthAdjust="spacingAndGlyphs">c</text></g></g>
<g transform="translate(82.5 668.5)"><rect x="0.5" y="0.5" width="13" height="15" rx="3.6" ry="3.6" fill="#fff" stroke="#000" stroke-width="1.1"/><g stroke="#000" stroke-width="0.35" fill="#000"><text x="2.6" y="13.5" font-size="13.4" textLength="5.2" lengthAdjust="spacingAndGlyphs">A</text><text x="8" y="13.5" font-size="8" textLength="3" lengthAdjust="spacingAndGlyphs">s</text></g></g>
<g transform="translate(82.5 684.5)"><rect x="0.5" y="0.5" width="13" height="15" rx="3.6" ry="3.6" fill="#fff" stroke="#000" stroke-width="1.1"/><g stroke="#000" stroke-width="0.35" fill="#000"><text x="2.6" y="13.5" font-size="13.4" textLength="5.2" lengthAdjust="spacingAndGlyphs">A</text><text x="8" y="13.5" font-size="8" textLength="3" lengthAdjust="spacingAndGlyphs">s</text></g></g>
<g transform="translate(82.5 700.5)"><rect x="0.5" y="0.5" width="13" height="15" rx="3.6" ry="3.6" fill="#fff" stroke="#000" stroke-width="1.1"/><g fill="none" stroke="#000" stroke-width="1.25" stroke-linecap="square" style="color:#000"><path d="M5.6 12.8Q3.2 9.6 3.6 6.8Q4.2 3.6 7 3.6Q9.8 3.6 10.4 6.8Q10.8 9.6 8.4 12.8"/><circle cx="4.6" cy="12.6" r="1.3"/><circle cx="9.4" cy="12.6" r="1.3"/></g></g>
<g transform="translate(133.4 668.5)"><rect x="0.5" y="0.5" width="13" height="15" rx="3.6" ry="3.6" fill="#fff" stroke="#000" stroke-width="1.1"/><g stroke="#000" stroke-width="0.35" fill="#000"><text x="2.6" y="13.5" font-size="13.4" textLength="5.2" lengthAdjust="spacingAndGlyphs">A</text><text x="8" y="13.5" font-size="8" textLength="3" lengthAdjust="spacingAndGlyphs">s</text></g></g>
<g transform="translate(133.4 684.5)"><rect x="0.5" y="0.5" width="13" height="15" rx="3.6" ry="3.6" fill="#fff" stroke="#000" stroke-width="1.1"/><g fill="none" stroke="#000" stroke-width="1.25" stroke-linecap="square" style="color:#000"><path d="M3 3.2Q5.6 4.4 7 6.6Q8.4 4.4 11 3.2M7 6.6V10.2M7 10.2Q5.8 12.4 3.2 13.6M7 10.2Q8.2 12.4 10.8 13.6"/></g></g>
<g transform="translate(133.4 700.5)"><rect x="0.5" y="0.5" width="13" height="15" rx="3.6" ry="3.6" fill="#fff" stroke="#000" stroke-width="1.1"/><g stroke="#000" stroke-width="0.35" fill="#000"><text x="2.6" y="13.5" font-size="14" textLength="6.6" lengthAdjust="spacingAndGlyphs">M</text><text x="9.3" y="13.5" font-size="8" textLength="2.9" lengthAdjust="spacingAndGlyphs">c</text></g></g>
<g transform="translate(261.4 668.5)"><rect x="0.5" y="0.5" width="13" height="15" rx="3.6" ry="3.6" fill="#fff" stroke="#000" stroke-width="1.1"/><g stroke="#000" stroke-width="0.35" fill="#000"><text x="2.6" y="13.5" font-size="13.4" textLength="5.2" lengthAdjust="spacingAndGlyphs">A</text><text x="8" y="13.5" font-size="8" textLength="3" lengthAdjust="spacingAndGlyphs">s</text></g></g>
<g transform="translate(261.4 684.5)"><rect x="0.5" y="0.5" width="13" height="15" rx="3.6" ry="3.6" fill="#fff" stroke="#000" stroke-width="1.1"/><g fill="none" stroke="#000" stroke-width="1.25" stroke-linecap="square" style="color:#000"><path d="M9.8 5.4A3.9 3.9 0 1 0 9.8 10.4M6.9 5.6V13.6M3.8 9.3H10.4"/></g></g>
<g transform="translate(261.4 700.5)"><rect x="0.5" y="0.5" width="13" height="15" rx="3.6" ry="3.6" fill="#fff" stroke="#000" stroke-width="1.1"/><g fill="none" stroke="#000" stroke-width="1.25" stroke-linecap="square" style="color:#000"><path d="M3.8 2.8Q11.8 3 11.6 8Q11.6 13 3.8 13.4Q7.8 11.6 7.8 8Q7.8 4.4 3.8 2.8Z" stroke-width="1"/></g></g>
<g transform="translate(321.5 668.5)"><rect x="0.5" y="0.5" width="13" height="15" rx="3.6" ry="3.6" fill="#fff" stroke="#000" stroke-width="1.1"/><g stroke="#000" stroke-width="0.35" fill="#000"><text x="2.6" y="13.5" font-size="13.4" textLength="5.2" lengthAdjust="spacingAndGlyphs">A</text><text x="8" y="13.5" font-size="8" textLength="3" lengthAdjust="spacingAndGlyphs">s</text></g></g>
<g transform="translate(321.5 684.5)"><rect x="0.5" y="0.5" width="13" height="15" rx="3.6" ry="3.6" fill="#fff" stroke="#000" stroke-width="1.1"/><g fill="none" stroke="#000" stroke-width="1.25" stroke-linecap="square" style="color:#000"><path d="M3 3.2Q5.6 4.4 7 6.6Q8.4 4.4 11 3.2M7 6.6V10.2M7 10.2Q5.8 12.4 3.2 13.6M7 10.2Q8.2 12.4 10.8 13.6"/></g></g>
<g transform="translate(321.5 700.5)"><rect x="0.5" y="0.5" width="13" height="15" rx="3.6" ry="3.6" fill="#fff" stroke="#000" stroke-width="1.1"/><g fill="none" stroke="#000" stroke-width="1.25" stroke-linecap="square" style="color:#000"><circle cx="7" cy="7" r="3"/><path d="M7 4V13M4 7H10M4 13.6H10M5 2.6L6.2 4M9 2.6L7.8 4"/></g></g>
<g transform="translate(388.5 668.5)"><rect x="0.5" y="0.5" width="13" height="15" rx="3.6" ry="3.6" fill="#fff" stroke="#000" stroke-width="1.1"/><g stroke="#000" stroke-width="0.35" fill="#000"><text x="2.6" y="13.5" font-size="13.4" textLength="5.2" lengthAdjust="spacingAndGlyphs">A</text><text x="8" y="13.5" font-size="8" textLength="3" lengthAdjust="spacingAndGlyphs">s</text></g></g>
<g transform="translate(388.5 684.5)"><rect x="0.5" y="0.5" width="13" height="15" rx="3.6" ry="3.6" fill="#fff" stroke="#000" stroke-width="1.1"/><g fill="none" stroke="#000" stroke-width="1.25" stroke-linecap="square" style="color:#000"><path d="M3.4 6.8Q3.6 3.2 7 3.2Q10.4 3.2 10.6 6.8M7 3.2V13.6M4.8 9.2H9.2"/></g></g>
<g transform="translate(388.5 700.5)"><rect x="0.5" y="0.5" width="13" height="15" rx="3.6" ry="3.6" fill="#fff" stroke="#000" stroke-width="1.1"/><g fill="none" stroke="#000" stroke-width="1.25" stroke-linecap="square" style="color:#000"><path d="M3.8 2.8Q11.8 3 11.6 8Q11.6 13 3.8 13.4Q7.8 11.6 7.8 8Q7.8 4.4 3.8 2.8Z" stroke-width="1"/></g></g>
<g transform="translate(471.5 668.5)"><rect x="0.5" y="0.5" width="13" height="15" rx="3.6" ry="3.6" fill="#fff" stroke="#000" stroke-width="1.1"/><g stroke="#000" stroke-width="0.35" fill="#000"><text x="2.6" y="13.5" font-size="13.4" textLength="5.2" lengthAdjust="spacingAndGlyphs">A</text><text x="8" y="13.5" font-size="8" textLength="3" lengthAdjust="spacingAndGlyphs">s</text></g></g>
<g transform="translate(471.5 684.5)"><rect x="0.5" y="0.5" width="13" height="15" rx="3.6" ry="3.6" fill="#fff" stroke="#000" stroke-width="1.1"/><g stroke="#000" stroke-width="0.35" fill="#000"><text x="2.6" y="13.5" font-size="14" textLength="6.6" lengthAdjust="spacingAndGlyphs">M</text><text x="9.3" y="13.5" font-size="8" textLength="2.9" lengthAdjust="spacingAndGlyphs">c</text></g></g>
<g transform="translate(471.5 700.5)"><rect x="0.5" y="0.5" width="13" height="15" rx="3.6" ry="3.6" fill="#fff" stroke="#000" stroke-width="1.1"/><g fill="none" stroke="#000" stroke-width="1.25" stroke-linecap="square" style="color:#000"><path d="M4.3 3.6Q6.8 4.8 6.4 7.2Q6 9.4 4.3 11.4H9.8M7.9 9.2V13.6"/></g></g>
<g transform="translate(612.5 668.5)"><rect x="0.5" y="0.5" width="13" height="15" rx="3.6" ry="3.6" fill="#fff" stroke="#000" stroke-width="1.1"/><g stroke="#000" stroke-width="0.35" fill="#000"><text x="2.6" y="13.5" font-size="13.4" textLength="5.2" lengthAdjust="spacingAndGlyphs">A</text><text x="8" y="13.5" font-size="8" textLength="3" lengthAdjust="spacingAndGlyphs">s</text></g></g>
<g transform="translate(612.5 684.5)"><rect x="0.5" y="0.5" width="13" height="15" rx="3.6" ry="3.6" fill="#fff" stroke="#000" stroke-width="1.1"/><g fill="none" stroke="#000" stroke-width="1.25" stroke-linecap="square" style="color:#000"><path d="M7 2.4V10M5.5 4.4L7 2.4L8.5 4.4M3.6 7.2L10.4 13.6M10.4 7.2L3.6 13.6M3.6 7.2Q7 4 10.4 7.2" stroke-width="1.1"/></g></g>
<g transform="translate(612.5 700.5)"><rect x="0.5" y="0.5" width="13" height="15" rx="3.6" ry="3.6" fill="#fff" stroke="#000" stroke-width="1.1"/><g fill="none" stroke="#000" stroke-width="1.25" stroke-linecap="square" style="color:#000"><path d="M9.8 5.4A3.9 3.9 0 1 0 9.8 10.4M6.9 5.6V13.6M3.8 9.3H10.4"/></g></g>
<g transform="translate(659.1 668.5)"><rect x="0.5" y="0.5" width="13" height="15" rx="3.6" ry="3.6" fill="#fff" stroke="#000" stroke-width="1.1"/><g stroke="#000" stroke-width="0.35" fill="#000"><text x="2.6" y="13.5" font-size="13.4" textLength="5.2" lengthAdjust="spacingAndGlyphs">A</text><text x="8" y="13.5" font-size="8" textLength="3" lengthAdjust="spacingAndGlyphs">s</text></g></g>
<g transform="translate(659.1 684.5)"><rect x="0.5" y="0.5" width="13" height="15" rx="3.6" ry="3.6" fill="#fff" stroke="#000" stroke-width="1.1"/><g fill="none" stroke="#000" stroke-width="1.25" stroke-linecap="square" style="color:#000"><circle cx="7" cy="7" r="3"/><path d="M7 4V13M4 7H10M4 13.6H10M5 2.6L6.2 4M9 2.6L7.8 4"/></g></g>
<g transform="translate(659.1 700.5)"><rect x="0.5" y="0.5" width="13" height="15" rx="3.6" ry="3.6" fill="#fff" stroke="#000" stroke-width="1.1"/><g fill="none" stroke="#000" stroke-width="1.25" stroke-linecap="square" style="color:#000"><path d="M4.3 3.6Q6.8 4.8 6.4 7.2Q6 9.4 4.3 11.4H9.8M7.9 9.2V13.6"/></g></g>
<g transform="translate(672.8 668.5)"><rect x="0.5" y="0.5" width="13" height="15" rx="3.6" ry="3.6" fill="#fff" stroke="#000" stroke-width="1.1"/><g stroke="#000" stroke-width="0.35" fill="#000"><text x="2.6" y="13.5" font-size="13.4" textLength="5.2" lengthAdjust="spacingAndGlyphs">A</text><text x="8" y="13.5" font-size="8" textLength="3" lengthAdjust="spacingAndGlyphs">s</text></g></g>
<g transform="translate(672.8 684.5)"><rect x="0.5" y="0.5" width="13" height="15" rx="3.6" ry="3.6" fill="#fff" stroke="#000" stroke-width="1.1"/><g stroke="#000" stroke-width="0.35" fill="#000"><text x="2.6" y="13.5" font-size="13.4" textLength="5.2" lengthAdjust="spacingAndGlyphs">A</text><text x="8" y="13.5" font-size="8" textLength="3" lengthAdjust="spacingAndGlyphs">s</text></g></g>
<g transform="translate(739.4 668.5)"><rect x="0.5" y="0.5" width="13" height="15" rx="3.6" ry="3.6" fill="#fff" stroke="#000" stroke-width="1.1"/><g stroke="#000" stroke-width="0.35" fill="#000"><text x="2.6" y="13.5" font-size="13.4" textLength="5.2" lengthAdjust="spacingAndGlyphs">A</text><text x="8" y="13.5" font-size="8" textLength="3" lengthAdjust="spacingAndGlyphs">s</text></g></g>
<g transform="translate(739.4 684.5)"><rect x="0.5" y="0.5" width="13" height="15" rx="3.6" ry="3.6" fill="#fff" stroke="#000" stroke-width="1.1"/><g fill="none" stroke="#000" stroke-width="1.25" stroke-linecap="square" style="color:#000"><path d="M3.4 6.8Q3.6 3.2 7 3.2Q10.4 3.2 10.6 6.8M7 3.2V13.6M4.8 9.2H9.2"/></g></g>
<g transform="translate(739.4 700.5)"><rect x="0.5" y="0.5" width="13" height="15" rx="3.6" ry="3.6" fill="#fff" stroke="#000" stroke-width="1.1"/><g fill="none" stroke="#000" stroke-width="1.25" stroke-linecap="square" style="color:#000"><path d="M7 2.4V10M5.5 4.4L7 2.4L8.5 4.4M3.6 7.2L10.4 13.6M10.4 7.2L3.6 13.6M3.6 7.2Q7 4 10.4 7.2" stroke-width="1.1"/></g></g>
<g transform="translate(1102.3 668.5)"><rect x="0.5" y="0.5" width="13" height="15" rx="3.6" ry="3.6" fill="#fff" stroke="#000" stroke-width="1.1"/><g stroke="#000" stroke-width="0.35" fill="#000"><text x="2.6" y="13.5" font-size="13.4" textLength="5.2" lengthAdjust="spacingAndGlyphs">A</text><text x="8" y="13.5" font-size="8" textLength="3" lengthAdjust="spacingAndGlyphs">s</text></g></g>
<g transform="translate(1102.3 684.5)"><rect x="0.5" y="0.5" width="13" height="15" rx="3.6" ry="3.6" fill="#fff" stroke="#000" stroke-width="1.1"/><g fill="none" stroke="#000" stroke-width="1.25" stroke-linecap="square" style="color:#000"><path d="M3.4 3.4V9.8H11.4M5 5.6H11.4M6.6 5.6V13M10 5.6V13M4.2 13H11.8" stroke-width="1.1"/></g></g>
<g transform="translate(1102.3 700.5)"><rect x="0.5" y="0.5" width="13" height="15" rx="3.6" ry="3.6" fill="#fff" stroke="#000" stroke-width="1.1"/><g fill="none" stroke="#000" stroke-width="1.25" stroke-linecap="square" style="color:#000"><path d="M9.8 5.4A3.9 3.9 0 1 0 9.8 10.4M6.9 5.6V13.6M3.8 9.3H10.4"/></g></g>
<g transform="translate(1118.3 668.5)"><rect x="0.5" y="0.5" width="13" height="15" rx="3.6" ry="3.6" fill="#fff" stroke="#000" stroke-width="1.1"/><g stroke="#000" stroke-width="0.35" fill="#000"><text x="2.6" y="13.5" font-size="13.4" textLength="5.2" lengthAdjust="spacingAndGlyphs">A</text><text x="8" y="13.5" font-size="8" textLength="3" lengthAdjust="spacingAndGlyphs">s</text></g></g>
<g transform="translate(1118.3 684.5)"><rect x="0.5" y="0.5" width="13" height="15" rx="3.6" ry="3.6" fill="#fff" stroke="#000" stroke-width="1.1"/><g fill="none" stroke="#000" stroke-width="1.25" stroke-linecap="square" style="color:#000"><path d="M7 3V9.6M5 5.4L7 3L9 5.4M7 9L3.8 13.2M7 9L10.2 13.2M3.2 13.6H10.8"/></g></g>
<g transform="translate(1118.3 700.5)"><rect x="0.5" y="0.5" width="13" height="15" rx="3.6" ry="3.6" fill="#fff" stroke="#000" stroke-width="1.1"/><g fill="none" stroke="#000" stroke-width="1.25" stroke-linecap="square" style="color:#000"><path d="M3.8 2.8Q11.8 3 11.6 8Q11.6 13 3.8 13.4Q7.8 11.6 7.8 8Q7.8 4.4 3.8 2.8Z" stroke-width="1"/></g></g>
<g transform="translate(1229.3 668.5)"><rect x="0.5" y="0.5" width="13" height="15" rx="3.6" ry="3.6" fill="#fff" stroke="#000" stroke-width="1.1"/><g stroke="#000" stroke-width="0.35" fill="#000"><text x="2.6" y="13.5" font-size="13.4" textLength="5.2" lengthAdjust="spacingAndGlyphs">A</text><text x="8" y="13.5" font-size="8" textLength="3" lengthAdjust="spacingAndGlyphs">s</text></g></g>
<g transform="translate(1229.3 684.5)"><rect x="0.5" y="0.5" width="13" height="15" rx="3.6" ry="3.6" fill="#fff" stroke="#000" stroke-width="1.1"/><g fill="none" stroke="#000" stroke-width="1.25" stroke-linecap="square" style="color:#000"><path d="M3.4 3.4V9.8H11.4M5 5.6H11.4M6.6 5.6V13M10 5.6V13M4.2 13H11.8" stroke-width="1.1"/></g></g>
<g transform="translate(1229.3 700.5)"><rect x="0.5" y="0.5" width="13" height="15" rx="3.6" ry="3.6" fill="#fff" stroke="#000" stroke-width="1.1"/><g fill="none" stroke="#000" stroke-width="1.25" stroke-linecap="square" style="color:#000"><path d="M3.4 6.8Q3.6 3.2 7 3.2Q10.4 3.2 10.6 6.8M7 3.2V13.6M4.8 9.2H9.2"/></g></g>
<g transform="translate(5.0 573.0)"><rect x="0.5" y="0.5" width="13" height="15" rx="3.6" ry="3.6" fill="#fff" stroke="#000" stroke-width="1.1"/><g stroke="#000" stroke-width="0.35" fill="#000"><text x="2.6" y="13.5" font-size="13.4" textLength="5.2" lengthAdjust="spacingAndGlyphs">A</text><text x="8" y="13.5" font-size="8" textLength="3" lengthAdjust="spacingAndGlyphs">s</text></g></g>
<g transform="translate(19.0 573.0)"><rect x="0.5" y="0.5" width="13" height="15" rx="3.6" ry="3.6" fill="#fff" stroke="#000" stroke-width="1.1"/><g fill="none" stroke="#000" stroke-width="1.25" stroke-linecap="square" style="color:#000"><path d="M5.6 12.8Q3.2 9.6 3.6 6.8Q4.2 3.6 7 3.6Q9.8 3.6 10.4 6.8Q10.8 9.6 8.4 12.8"/><circle cx="4.6" cy="12.6" r="1.3"/><circle cx="9.4" cy="12.6" r="1.3"/></g></g>
<g transform="translate(33.0 573.0)"><rect x="0.5" y="0.5" width="13" height="15" rx="3.6" ry="3.6" fill="#fff" stroke="#000" stroke-width="1.1"/><g stroke="#000" stroke-width="0.35" fill="#000"><text x="2.6" y="13.5" font-size="13.4" textLength="5.2" lengthAdjust="spacingAndGlyphs">A</text><text x="8" y="13.5" font-size="8" textLength="3" lengthAdjust="spacingAndGlyphs">s</text></g></g>
</svg>
</body></html>
